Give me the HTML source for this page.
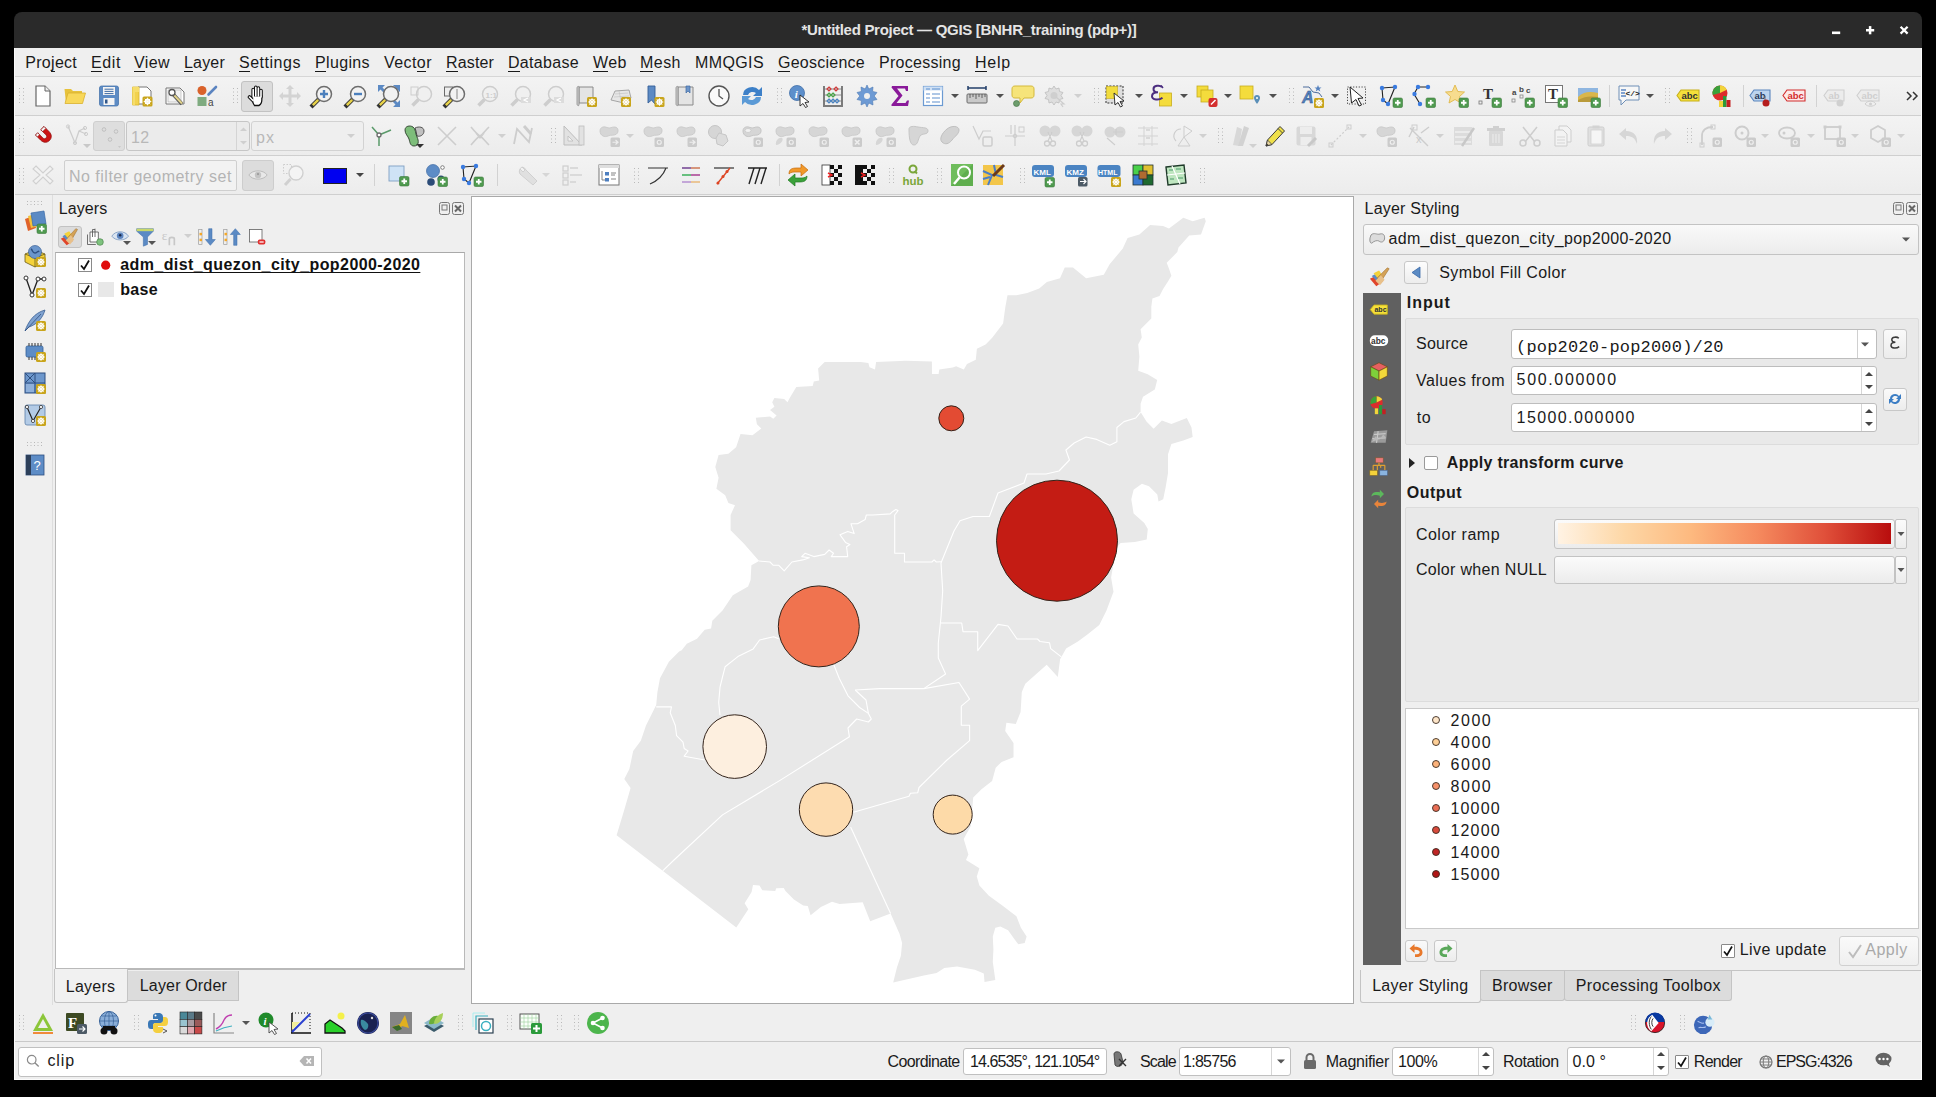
<!DOCTYPE html><html><head><meta charset="utf-8"><style>
*{margin:0;padding:0;box-sizing:border-box}
html,body{width:1936px;height:1097px;background:#000;overflow:hidden;font-family:"Liberation Sans",sans-serif;color:#1a1a1a}
.t{position:absolute;white-space:nowrap;line-height:1;font-size:16px}
svg{overflow:visible;position:absolute}
.u{text-decoration:underline;text-underline-offset:2px}
</style></head><body>
<div style="position:absolute;left:14px;top:40px;width:1908px;height:1040px;background:#efefef"></div>
<div style="position:absolute;left:14px;top:12px;width:1908px;height:36px;background:#2a2a2a;border-radius:8px 8px 0 0"></div>
<div class="t" style="left:801.5px;top:22.10px;font-size:15px;letter-spacing:-0.294px;font-weight:700;color:#e4e4e4;font-family:'Liberation Sans',sans-serif;">*Untitled Project — QGIS [BNHR_training (pdp+)]</div>
<svg style="position:absolute;left:1816px;top:12px" width="106" height="36" viewBox="0 0 106 36"><rect x="16" y="19.5" width="8.2" height="2.6" fill="#fff"/><rect x="50" y="17" width="8.2" height="2.5" fill="#fff"/><rect x="52.85" y="14.1" width="2.5" height="8.2" fill="#fff"/><path d="M84.6 14.8L91.6 21.6M91.6 14.8L84.6 21.6" stroke="#fff" stroke-width="2.3"/></svg>
<div class="t" style="left:25.3px;top:55.06px;font-size:16px;letter-spacing:0.282px;font-weight:400;color:#1a1a1a;font-family:'Liberation Sans',sans-serif;">Project</div>
<div style="position:absolute;left:51px;top:71px;width:4px;height:1px;background:#1a1a1a"></div>
<div class="t" style="left:91.0px;top:55.06px;font-size:16px;letter-spacing:0.602px;font-weight:400;color:#1a1a1a;font-family:'Liberation Sans',sans-serif;">Edit</div>
<div style="position:absolute;left:91px;top:71px;width:11px;height:1px;background:#1a1a1a"></div>
<div class="t" style="left:134.0px;top:55.06px;font-size:16px;letter-spacing:0.395px;font-weight:400;color:#1a1a1a;font-family:'Liberation Sans',sans-serif;">View</div>
<div style="position:absolute;left:134px;top:71px;width:11px;height:1px;background:#1a1a1a"></div>
<div class="t" style="left:184.0px;top:55.06px;font-size:16px;letter-spacing:0.191px;font-weight:400;color:#1a1a1a;font-family:'Liberation Sans',sans-serif;">Layer</div>
<div style="position:absolute;left:184px;top:71px;width:9px;height:1px;background:#1a1a1a"></div>
<div class="t" style="left:239.0px;top:55.06px;font-size:16px;letter-spacing:0.518px;font-weight:400;color:#1a1a1a;font-family:'Liberation Sans',sans-serif;">Settings</div>
<div style="position:absolute;left:239px;top:71px;width:11px;height:1px;background:#1a1a1a"></div>
<div class="t" style="left:315.0px;top:55.06px;font-size:16px;letter-spacing:0.355px;font-weight:400;color:#1a1a1a;font-family:'Liberation Sans',sans-serif;">Plugins</div>
<div style="position:absolute;left:315px;top:71px;width:11px;height:1px;background:#1a1a1a"></div>
<div class="t" style="left:384.0px;top:55.06px;font-size:16px;letter-spacing:0.435px;font-weight:400;color:#1a1a1a;font-family:'Liberation Sans',sans-serif;">Vector</div>
<div style="position:absolute;left:417px;top:71px;width:9px;height:1px;background:#1a1a1a"></div>
<div class="t" style="left:446.0px;top:55.06px;font-size:16px;letter-spacing:0.141px;font-weight:400;color:#1a1a1a;font-family:'Liberation Sans',sans-serif;">Raster</div>
<div style="position:absolute;left:446px;top:71px;width:12px;height:1px;background:#1a1a1a"></div>
<div class="t" style="left:508.0px;top:55.06px;font-size:16px;letter-spacing:0.307px;font-weight:400;color:#1a1a1a;font-family:'Liberation Sans',sans-serif;">Database</div>
<div style="position:absolute;left:508px;top:71px;width:12px;height:1px;background:#1a1a1a"></div>
<div class="t" style="left:593.0px;top:55.06px;font-size:16px;letter-spacing:0.453px;font-weight:400;color:#1a1a1a;font-family:'Liberation Sans',sans-serif;">Web</div>
<div style="position:absolute;left:593px;top:71px;width:15px;height:1px;background:#1a1a1a"></div>
<div class="t" style="left:640.0px;top:55.06px;font-size:16px;letter-spacing:0.465px;font-weight:400;color:#1a1a1a;font-family:'Liberation Sans',sans-serif;">Mesh</div>
<div style="position:absolute;left:640px;top:71px;width:13px;height:1px;background:#1a1a1a"></div>
<div class="t" style="left:695.0px;top:55.06px;font-size:16px;letter-spacing:0.385px;font-weight:400;color:#1a1a1a;font-family:'Liberation Sans',sans-serif;">MMQGIS</div>
<div class="t" style="left:778.0px;top:55.06px;font-size:16px;letter-spacing:0.245px;font-weight:400;color:#1a1a1a;font-family:'Liberation Sans',sans-serif;">Geoscience</div>
<div style="position:absolute;left:778px;top:71px;width:12px;height:1px;background:#1a1a1a"></div>
<div class="t" style="left:879.0px;top:55.06px;font-size:16px;letter-spacing:0.281px;font-weight:400;color:#1a1a1a;font-family:'Liberation Sans',sans-serif;">Processing</div>
<div style="position:absolute;left:905px;top:71px;width:8px;height:1px;background:#1a1a1a"></div>
<div class="t" style="left:975.0px;top:55.06px;font-size:16px;letter-spacing:0.766px;font-weight:400;color:#1a1a1a;font-family:'Liberation Sans',sans-serif;">Help</div>
<div style="position:absolute;left:975px;top:71px;width:12px;height:1px;background:#1a1a1a"></div>
<div style="position:absolute;left:14px;top:76px;width:1908px;height:1px;background:#d6d6d6"></div>
<div style="position:absolute;left:14px;top:77px;width:1908px;height:39px;background:linear-gradient(#f3f3f3,#ececec)"></div>
<div style="position:absolute;left:14px;top:116px;width:1908px;height:39px;background:linear-gradient(#f3f3f3,#ececec)"></div>
<div style="position:absolute;left:14px;top:156px;width:1908px;height:39px;background:linear-gradient(#f3f3f3,#ececec)"></div>
<div style="position:absolute;left:14px;top:115px;width:1908px;height:1px;background:#cfcfcf"></div>
<div style="position:absolute;left:14px;top:155px;width:1908px;height:1px;background:#cfcfcf"></div>
<div style="position:absolute;left:14px;top:194px;width:1908px;height:1px;background:#cfcfcf"></div>
<div style="position:absolute;left:14px;top:195px;width:1908px;height:810px;background:#efefef"></div>
<div style="position:absolute;left:52px;top:195px;width:1px;height:810px;background:#dedede"></div>
<div class="t" style="left:58.7px;top:201.46px;font-size:16px;letter-spacing:0.109px;font-weight:400;color:#1a1a1a;font-family:'Liberation Sans',sans-serif;">Layers</div>
<div style="position:absolute;left:55px;top:252px;width:410px;height:717px;background:#fff;border:1px solid #b9b9b9;border-top-color:#a9a9a9"></div>
<svg style="position:absolute;left:439px;top:202px" width="26" height="14" viewBox="0 0 26 14"><rect x="0.5" y="0.5" width="10" height="12" rx="2" fill="none" stroke="#777"/><rect x="3" y="3" width="5" height="5" fill="none" stroke="#777"/><rect x="13.5" y="0.5" width="11" height="12" rx="2" fill="none" stroke="#777"/><path d="M16 3.5L22 9.5M22 3.5L16 9.5" stroke="#666" stroke-width="2"/></svg>
<div style="position:absolute;left:78px;top:258px;width:14px;height:14px;background:#fff;border:1px solid #8a8a8a"></div>
<svg style="position:absolute;left:78px;top:258px" width="14" height="14" viewBox="0 0 14 14"><path d="M3 7.5L6 11L11 2.5" fill="none" stroke="#111" stroke-width="1.8"/></svg>
<div style="position:absolute;left:78px;top:283px;width:14px;height:14px;background:#fff;border:1px solid #8a8a8a"></div>
<svg style="position:absolute;left:78px;top:283px" width="14" height="14" viewBox="0 0 14 14"><path d="M3 7.5L6 11L11 2.5" fill="none" stroke="#111" stroke-width="1.8"/></svg>
<svg style="position:absolute;left:100px;top:260px" width="12" height="12" viewBox="0 0 12 12"><circle cx="5.7" cy="5.2" r="4.6" fill="#e00d0d"/></svg>
<div style="position:absolute;left:98px;top:282px;width:16px;height:15px;background:#e8e8e8"></div>
<div class="t" style="left:120.2px;top:257.16px;font-size:16px;letter-spacing:0.419px;font-weight:700;color:#111;font-family:'Liberation Sans',sans-serif;text-decoration:underline;text-underline-offset:2px;text-decoration-thickness:1.2px;text-decoration-skip-ink:none">adm_dist_quezon_city_pop2000-2020</div>
<div class="t" style="left:120.2px;top:281.76px;font-size:16px;letter-spacing:0.325px;font-weight:700;color:#111;font-family:'Liberation Sans',sans-serif;">base</div>
<div style="position:absolute;left:55px;top:969px;width:410px;height:1px;background:#b9b9b9"></div>
<div style="position:absolute;left:127px;top:971px;width:112px;height:30px;background:#dcdcdc;border:1px solid #c4c4c4;border-top:none"></div>
<div style="position:absolute;left:54px;top:969px;width:74px;height:34px;background:#f1f1f1;border:1px solid #c4c4c4;border-top:none;border-radius:0 0 3px 3px"></div>
<div class="t" style="left:65.8px;top:978.76px;font-size:16px;letter-spacing:0.226px;font-weight:400;color:#1a1a1a;font-family:'Liberation Sans',sans-serif;">Layers</div>
<div class="t" style="left:139.8px;top:977.66px;font-size:16px;letter-spacing:0.162px;font-weight:400;color:#1a1a1a;font-family:'Liberation Sans',sans-serif;">Layer Order</div>
<div style="position:absolute;left:471px;top:196px;width:883px;height:808px;background:#fff;border:1px solid #a9a9a9"></div>
<svg style="position:absolute;left:472px;top:197px" width="881" height="806" viewBox="0 0 881 806"><polygon points="352.7,164.9 388.8,164.9 396.4,166.0 397.5,170.3 403.0,172.5 404.1,164.9 433.6,163.8 459.9,164.4 460.0,176.9 466.6,176.9 467.3,172.5 480.8,170.4 484.1,169.3 491.8,172.5 495.0,167.1 503.8,162.7 504.9,151.8 513.6,147.4 520.2,140.8 531.1,126.6 533.3,110.2 535.5,98.2 544.3,98.2 555.2,96.0 567.2,91.6 574.9,85.0 588.0,81.2 592.7,70.6 601.0,70.6 614.1,81.2 631.8,77.7 637.8,67.0 650.8,51.6 655.6,40.9 667.4,37.4 678.1,27.9 691.1,29.1 697.0,31.4 711.3,20.8 720.7,24.3 732.6,20.8 733.8,24.3 729.0,37.4 717.2,38.6 706.5,50.4 705.3,55.1 694.7,65.8 697.0,71.7 699.4,78.8 695.8,84.8 691.1,91.9 687.5,99.0 680.4,101.4 679.3,109.7 679.3,121.5 668.6,132.2 669.8,140.5 666.2,147.6 667.4,159.4 666.2,173.7 675.7,177.2 685.2,183.1 682.8,192.6 671.0,199.7 668.6,206.8 668.6,215.1 674.5,224.6 681.6,231.7 689.9,223.4 699.4,227.0 714.8,221.0 719.5,230.5 720.7,240.0 711.3,243.6 699.4,247.1 697.0,254.2 696.0,257.2 696.0,276.2 693.6,290.4 691.2,302.3 686.5,304.6 685.3,297.5 677.0,289.2 669.9,286.8 661.6,292.8 659.3,302.3 661.6,316.5 672.3,326.0 675.8,331.9 674.7,342.5 662.8,344.9 648.6,346.1 644.0,351.0 639.1,380.5 641.5,394.7 634.4,413.7 627.3,427.9 615.4,437.4 605.9,444.5 594.1,451.6 588.1,462.2 585.8,480.0 574.7,467.7 553.3,486.7 549.8,495.0 548.6,515.1 543.8,527.0 534.4,525.8 533.2,534.1 541.5,546.0 541.5,560.2 529.6,564.9 523.7,570.8 520.1,583.9 509.5,592.2 501.2,600.5 500.0,614.7 498.8,628.9 491.7,642.0 496.4,657.4 494.0,663.0 507.4,671.3 504.8,679.6 507.4,688.5 516.9,698.7 531.0,709.0 544.4,719.2 548.9,730.7 554.6,739.6 552.7,746.0 546.3,747.3 542.5,742.2 536.1,733.2 528.4,729.4 523.3,730.7 520.8,739.6 521.4,752.4 520.8,765.1 523.3,783.0 512.5,784.9 511.8,776.6 502.9,772.8 485.0,769.6 472.3,770.9 464.6,776.0 451.8,778.5 421.2,785.6 425.0,770.2 428.9,758.7 430.1,746.0 427.6,737.0 418.6,716.6 398.2,724.3 390.7,705.3 367.5,707.1 360.0,704.8 348.9,709.9 338.6,718.3 335.8,709.0 331.2,708.5 321.9,702.5 313.5,694.1 311.7,690.9 304.2,691.3 303.3,694.1 290.3,693.2 287.5,688.6 281.0,688.1 279.6,695.1 272.6,706.2 276.3,712.3 264.3,730.4 144.6,638.3 152.3,612.8 158.6,591.1 152.3,582.1 157.4,571.9 161.2,554.0 168.8,543.8 174.0,528.5 184.2,508.1 185.4,495.3 188.0,481.3 196.9,464.7 207.1,454.5 209.7,453.2 214.8,446.8 225.0,441.7 232.7,432.8 239.1,431.5 240.3,423.8 250.5,413.6 260.8,398.3 276.1,389.4 278.6,383.0 279.4,368.3 287.1,364.0 271.8,346.5 258.6,333.3 258.6,318.0 263.0,308.2 256.4,306.0 253.2,298.3 244.4,291.8 246.6,280.8 243.3,269.9 246.6,257.9 256.4,256.8 264.1,250.2 268.5,237.0 280.5,238.2 289.3,231.6 284.9,227.2 283.8,220.7 298.0,219.6 301.3,221.8 304.6,218.5 298.0,213.0 302.4,209.7 300.2,205.3 302.4,201.0 312.2,202.1 315.5,205.3 317.7,201.0 321.0,195.5 324.3,190.0 340.7,188.9 341.8,184.6 347.2,183.5 346.1,171.4" fill="#e8e8e8"/><polyline points="668.6,215.1 663.8,221.0 652.0,224.6 644.9,230.5 644.9,244.8 637.8,248.3 624.7,242.4 614.1,240.0 602.2,246.0 593.9,253.0 597.5,263.0 587.0,274.0 574.0,277.0 555.0,277.0 552.0,286.0 526.0,296.0 517.4,319.5 501.0,319.5 488.0,323.8 482.0,334.0 470.7,361.8 469.0,366.0 470.7,393.8 469.0,420.0 466.3,446.0 466.3,461.0 473.6,477.0 451.8,491.6 408.0,491.6 383.2,493.0" fill="none" stroke="#fff" stroke-width="1.1" stroke-linejoin="round"/><polyline points="287.1,364.0 298.0,365.0 301.3,368.3 306.8,368.3 312.2,373.8 319.9,365.0 330.8,362.9 337.4,360.7 329.7,359.6 333.0,356.3 341.8,359.6 352.7,357.4 357.1,353.0 361.5,356.3 359.3,359.6 375.7,359.6 374.6,349.7 377.9,347.5 373.5,345.4 368.0,337.7 375.7,334.4 382.2,336.6 379.0,326.8 385.5,326.8 393.2,322.4 394.3,318.0 400.8,318.0 418.3,316.9 420.5,314.7 423.8,312.5 426.0,313.6 422.7,318.0 422.7,356.3 432.5,356.3 432.5,365.0 459.9,365.0 462.1,362.9 464.3,365.0 469.0,364.7" fill="none" stroke="#fff" stroke-width="1.1" stroke-linejoin="round"/><polyline points="469.0,426.0 489.7,426.0 491.0,434.7 505.7,434.7 505.7,453.6 526.0,427.4 536.0,429.0 545.0,442.0 565.5,442.0 568.0,444.5 577.5,445.7 578.7,451.6 589.3,459.9" fill="none" stroke="#fff" stroke-width="1.1" stroke-linejoin="round"/><polyline points="451.8,491.6 487.0,485.5 497.6,502.1 489.3,509.2 489.3,528.2 497.6,528.2 497.6,543.6 475.0,563.0 447.0,590.5 445.7,595.8 438.4,596.3 437.0,599.3 381.5,615.3" fill="none" stroke="#fff" stroke-width="1.1" stroke-linejoin="round"/><polyline points="378.6,629.9 418.6,716.6" fill="none" stroke="#fff" stroke-width="1.1" stroke-linejoin="round"/><polyline points="190.7,673.9 202.0,663.0 250.5,617.9 308.0,583.4 377.4,539.7 376.0,531.0 384.7,522.0 396.4,525.0 399.3,522.0 396.4,516.4 387.6,510.5 376.0,498.8 367.2,481.3 361.4,466.8" fill="none" stroke="#fff" stroke-width="1.1" stroke-linejoin="round"/><polyline points="383.2,493.0 394.0,503.0 396.4,516.4" fill="none" stroke="#fff" stroke-width="1.1" stroke-linejoin="round"/><polyline points="184.2,509.9 199.5,509.9 198.2,515.8 203.3,528.5 204.6,538.7 211.0,545.1 212.2,551.5 216.1,554.0 212.2,559.2 232.7,563.0" fill="none" stroke="#fff" stroke-width="1.1" stroke-linejoin="round"/><polyline points="248.0,518.3 246.7,505.5 248.0,490.2 250.5,480.0 253.1,469.8 265.9,459.6 281.2,451.9 287.6,443.0 301.6,439.7 306.7,441.7" fill="none" stroke="#fff" stroke-width="1.1" stroke-linejoin="round"/><circle cx="479.3" cy="221.3" r="12.5" fill="#e34b33" stroke="#33231a" stroke-width="1"/><circle cx="585.0" cy="343.7" r="60.5" fill="#c41c14" stroke="#33231a" stroke-width="1"/><circle cx="346.8" cy="429.4" r="40.5" fill="#f0734f" stroke="#33231a" stroke-width="1"/><circle cx="262.7" cy="549.6" r="31.8" fill="#fdefdf" stroke="#33231a" stroke-width="1"/><circle cx="354.0" cy="612.6" r="26.7" fill="#fddcb0" stroke="#33231a" stroke-width="1"/><circle cx="480.7" cy="617.6" r="19.5" fill="#fddaa8" stroke="#33231a" stroke-width="1"/></svg>
<div class="t" style="left:1364.6px;top:201.36px;font-size:16px;letter-spacing:0.203px;font-weight:400;color:#1a1a1a;font-family:'Liberation Sans',sans-serif;">Layer Styling</div>
<svg style="position:absolute;left:1893px;top:202px" width="26" height="14" viewBox="0 0 26 14"><rect x="0.5" y="0.5" width="10" height="12" rx="2" fill="none" stroke="#777"/><rect x="3" y="3" width="5" height="5" fill="none" stroke="#777"/><rect x="13.5" y="0.5" width="11" height="12" rx="2" fill="none" stroke="#777"/><path d="M16 3.5L22 9.5M22 3.5L16 9.5" stroke="#666" stroke-width="2"/></svg>
<div style="position:absolute;left:1363px;top:224px;width:556px;height:31px;background:linear-gradient(#f9f9f9,#ececec);border:1px solid #c3c3c3;border-radius:3px"></div>
<svg style="position:absolute;left:1369px;top:232px" width="17" height="13" viewBox="0 0 17 13"><path d="M2 3C5 0 8 3 11 2C15 1 16 4 15.5 7C15 10 12 11 10 9C8 8 5 9 3 11C1 12 0.5 8 1 6Z" fill="#dcdcdc" stroke="#8c8c8c" stroke-width="0.9"/></svg>
<div class="t" style="left:1388.4px;top:231.26px;font-size:16px;letter-spacing:0.357px;font-weight:400;color:#1a1a1a;font-family:'Liberation Sans',sans-serif;">adm_dist_quezon_city_pop2000-2020</div>
<svg style="position:absolute;left:1901px;top:235px" width="10" height="8" viewBox="0 0 10 8"><path d="M1 2.5L9 2.5L5 6.5Z" fill="#555"/></svg>
<div style="position:absolute;left:1404px;top:261px;width:24px;height:23px;background:linear-gradient(#fdfdfd,#ededed);border:1px solid #c8c8c8;border-radius:3px"></div>
<svg style="position:absolute;left:1409px;top:265px" width="14" height="15" viewBox="0 0 14 15"><path d="M3 7.5L11 2V13Z" fill="#5b8bc4" stroke="#3a6aa8" stroke-width="0.8"/></svg>
<div class="t" style="left:1439.3px;top:265.06px;font-size:16px;letter-spacing:0.364px;font-weight:400;color:#1a1a1a;font-family:'Liberation Sans',sans-serif;">Symbol Fill Color</div>
<div style="position:absolute;left:1363px;top:293px;width:38px;height:672px;background:#606060"></div>
<div class="t" style="left:1406.8px;top:295.36px;font-size:16px;letter-spacing:0.975px;font-weight:700;color:#1a1a1a;font-family:'Liberation Sans',sans-serif;">Input</div>
<div style="position:absolute;left:1405px;top:318px;width:514px;height:127px;background:#e9e9e9;border:1px solid #dcdcdc;border-radius:2px"></div>
<div class="t" style="left:1416.0px;top:335.96px;font-size:16px;letter-spacing:0.247px;font-weight:400;color:#1a1a1a;font-family:'Liberation Sans',sans-serif;">Source</div>
<div style="position:absolute;left:1511px;top:329px;width:366px;height:30px;background:#fff;border:1px solid #bdbdbd;border-radius:3px"></div>
<div style="position:absolute;left:1857px;top:330px;width:1px;height:28px;background:#d0d0d0"></div>
<svg style="position:absolute;left:1860px;top:340px" width="10" height="8" viewBox="0 0 10 8"><path d="M1 2.5L9 2.5L5 6.5Z" fill="#555"/></svg>
<div class="t" style="left:1516.0px;top:338.58px;font-size:17px;letter-spacing:0.182px;font-weight:400;color:#1a1a1a;font-family:'Liberation Mono',monospace;">(pop2020-pop2000)/20</div>
<div style="position:absolute;left:1883px;top:329px;width:24px;height:30px;background:linear-gradient(#fafafa,#ececec);border:1px solid #c8c8c8;border-radius:3px"></div>
<svg style="position:absolute;left:1890px;top:336px" width="10" height="13" viewBox="0 0 10 13"><path d="M8.8 2.2C7 0.5 1.8 0.8 1.8 3.5C1.8 5.5 3.6 6.2 5.4 6.2C3.2 6.2 1 7.2 1 9.4C1 12.4 6.5 12.8 9.2 10.6" fill="none" stroke="#3a3a3a" stroke-width="1.5"/></svg>
<div class="t" style="left:1416.0px;top:372.66px;font-size:16px;letter-spacing:0.433px;font-weight:400;color:#1a1a1a;font-family:'Liberation Sans',sans-serif;">Values from</div>
<div style="position:absolute;left:1511px;top:366px;width:366px;height:29px;background:#fff;border:1px solid #bdbdbd;border-radius:3px"></div>
<div style="position:absolute;left:1861px;top:367px;width:1px;height:27px;background:#d6d6d6"></div>
<svg style="position:absolute;left:1863px;top:369px" width="12" height="24" viewBox="0 0 12 24"><path d="M2 7L6 3L10 7Z" fill="#444"/><path d="M2 16L6 20L10 16Z" fill="#444"/></svg>
<div class="t" style="left:1516.6px;top:372.26px;font-size:16px;letter-spacing:1.659px;font-weight:400;color:#1a1a1a;font-family:'Liberation Sans',sans-serif;">500.000000</div>
<div class="t" style="left:1416.7px;top:409.66px;font-size:16px;letter-spacing:0.570px;font-weight:400;color:#1a1a1a;font-family:'Liberation Sans',sans-serif;">to</div>
<div style="position:absolute;left:1511px;top:403px;width:366px;height:29px;background:#fff;border:1px solid #bdbdbd;border-radius:3px"></div>
<div style="position:absolute;left:1861px;top:404px;width:1px;height:27px;background:#d6d6d6"></div>
<svg style="position:absolute;left:1863px;top:406px" width="12" height="24" viewBox="0 0 12 24"><path d="M2 7L6 3L10 7Z" fill="#444"/><path d="M2 16L6 20L10 16Z" fill="#444"/></svg>
<div class="t" style="left:1516.6px;top:409.66px;font-size:16px;letter-spacing:1.407px;font-weight:400;color:#1a1a1a;font-family:'Liberation Sans',sans-serif;">15000.000000</div>
<div style="position:absolute;left:1883px;top:388px;width:24px;height:23px;background:linear-gradient(#fafafa,#ececec);border:1px solid #c8c8c8;border-radius:3px"></div>
<svg style="position:absolute;left:1886px;top:390px" width="18" height="18" viewBox="0 0 18 18"><path d="M4 9A5 5 0 0 1 13 6L15 4V9H10L12 7A3.5 3.5 0 0 0 6 9Z" fill="#3b7dc4"/><path d="M14 9A5 5 0 0 1 5 12L3 14V9H8L6 11A3.5 3.5 0 0 0 12 9Z" fill="#3b7dc4"/></svg>
<svg style="position:absolute;left:1408px;top:457px" width="8" height="12" viewBox="0 0 8 12"><path d="M1 1L7 6L1 11Z" fill="#222"/></svg>
<div style="position:absolute;left:1424px;top:456px;width:14px;height:14px;background:#fff;border:1px solid #9a9a9a;border-radius:2px"></div>
<div class="t" style="left:1446.8px;top:454.86px;font-size:16px;letter-spacing:0.292px;font-weight:700;color:#1a1a1a;font-family:'Liberation Sans',sans-serif;">Apply transform curve</div>
<div class="t" style="left:1406.8px;top:484.96px;font-size:16px;letter-spacing:0.491px;font-weight:700;color:#1a1a1a;font-family:'Liberation Sans',sans-serif;">Output</div>
<div style="position:absolute;left:1405px;top:507px;width:514px;height:195px;background:#e9e9e9;border:1px solid #dcdcdc;border-radius:2px"></div>
<div class="t" style="left:1415.9px;top:526.86px;font-size:16px;letter-spacing:0.501px;font-weight:400;color:#1a1a1a;font-family:'Liberation Sans',sans-serif;">Color ramp</div>
<div style="position:absolute;left:1554px;top:519px;width:341px;height:30px;background:linear-gradient(#fbfbfb,#ececec);border:1px solid #c3c3c3;border-radius:3px"></div>
<div style="position:absolute;left:1558px;top:523px;width:333px;height:21px;background:linear-gradient(90deg,#fff3e4,#fdd7a6 20%,#fdb97f 40%,#f58a5e 60%,#e0503a 80%,#b80d0d)"></div>
<div style="position:absolute;left:1895px;top:519px;width:12px;height:30px;background:linear-gradient(#fbfbfb,#ececec);border:1px solid #c3c3c3;border-radius:2px"></div>
<svg style="position:absolute;left:1897px;top:531px" width="8" height="6" viewBox="0 0 8 6"><path d="M0.5 1L7.5 1L4 5Z" fill="#555"/></svg>
<div class="t" style="left:1415.9px;top:562.26px;font-size:16px;letter-spacing:0.321px;font-weight:400;color:#1a1a1a;font-family:'Liberation Sans',sans-serif;">Color when NULL</div>
<div style="position:absolute;left:1554px;top:556px;width:341px;height:28px;background:linear-gradient(#fbfbfb,#ececec);border:1px solid #c3c3c3;border-radius:3px"></div>
<div style="position:absolute;left:1895px;top:556px;width:12px;height:28px;background:linear-gradient(#fbfbfb,#ececec);border:1px solid #c3c3c3;border-radius:2px"></div>
<svg style="position:absolute;left:1897px;top:567px" width="8" height="6" viewBox="0 0 8 6"><path d="M0.5 1L7.5 1L4 5Z" fill="#555"/></svg>
<div style="position:absolute;left:1405px;top:708px;width:514px;height:221px;background:#fff;border:1px solid #c9c9c9"></div>
<svg style="position:absolute;left:1430px;top:714.0px" width="12" height="12" viewBox="0 0 12 12"><circle cx="6" cy="6" r="3.5" fill="#fde5c8" stroke="#3a2a20" stroke-width="0.9"/></svg>
<div class="t" style="left:1450.4px;top:713.06px;font-size:16px;letter-spacing:1.594px;font-weight:400;color:#1a1a1a;font-family:'Liberation Sans',sans-serif;">2000</div>
<svg style="position:absolute;left:1430px;top:736.0px" width="12" height="12" viewBox="0 0 12 12"><circle cx="6" cy="6" r="3.5" fill="#fdcf97" stroke="#3a2a20" stroke-width="0.9"/></svg>
<div class="t" style="left:1450.4px;top:735.06px;font-size:16px;letter-spacing:1.594px;font-weight:400;color:#1a1a1a;font-family:'Liberation Sans',sans-serif;">4000</div>
<svg style="position:absolute;left:1430px;top:758.0px" width="12" height="12" viewBox="0 0 12 12"><circle cx="6" cy="6" r="3.5" fill="#fbb27a" stroke="#3a2a20" stroke-width="0.9"/></svg>
<div class="t" style="left:1450.4px;top:757.06px;font-size:16px;letter-spacing:1.594px;font-weight:400;color:#1a1a1a;font-family:'Liberation Sans',sans-serif;">6000</div>
<svg style="position:absolute;left:1430px;top:780.0px" width="12" height="12" viewBox="0 0 12 12"><circle cx="6" cy="6" r="3.5" fill="#f6916a" stroke="#3a2a20" stroke-width="0.9"/></svg>
<div class="t" style="left:1450.4px;top:779.06px;font-size:16px;letter-spacing:1.594px;font-weight:400;color:#1a1a1a;font-family:'Liberation Sans',sans-serif;">8000</div>
<svg style="position:absolute;left:1430px;top:802.0px" width="12" height="12" viewBox="0 0 12 12"><circle cx="6" cy="6" r="3.5" fill="#ea6e55" stroke="#3a2a20" stroke-width="0.9"/></svg>
<div class="t" style="left:1450.4px;top:801.06px;font-size:16px;letter-spacing:1.214px;font-weight:400;color:#1a1a1a;font-family:'Liberation Sans',sans-serif;">10000</div>
<svg style="position:absolute;left:1430px;top:824.0px" width="12" height="12" viewBox="0 0 12 12"><circle cx="6" cy="6" r="3.5" fill="#d84a3c" stroke="#3a2a20" stroke-width="0.9"/></svg>
<div class="t" style="left:1450.4px;top:823.06px;font-size:16px;letter-spacing:1.214px;font-weight:400;color:#1a1a1a;font-family:'Liberation Sans',sans-serif;">12000</div>
<svg style="position:absolute;left:1430px;top:846.0px" width="12" height="12" viewBox="0 0 12 12"><circle cx="6" cy="6" r="3.5" fill="#bf2525" stroke="#3a2a20" stroke-width="0.9"/></svg>
<div class="t" style="left:1450.4px;top:845.06px;font-size:16px;letter-spacing:1.214px;font-weight:400;color:#1a1a1a;font-family:'Liberation Sans',sans-serif;">14000</div>
<svg style="position:absolute;left:1430px;top:868.0px" width="12" height="12" viewBox="0 0 12 12"><circle cx="6" cy="6" r="3.5" fill="#b01515" stroke="#3a2a20" stroke-width="0.9"/></svg>
<div class="t" style="left:1450.4px;top:867.06px;font-size:16px;letter-spacing:1.214px;font-weight:400;color:#1a1a1a;font-family:'Liberation Sans',sans-serif;">15000</div>
<div style="position:absolute;left:1405px;top:940px;width:23px;height:22px;background:linear-gradient(#fafafa,#ececec);border:1px solid #c8c8c8;border-radius:3px"></div>
<svg style="position:absolute;left:1408px;top:942px" width="17" height="17" viewBox="0 0 17 17"><path d="M1.5 6.5L6.5 2V4.8C11.5 4.5 14.5 7 14.5 10.5C14.5 13.5 12 15 9 15H7V12.3H9C10.5 12.3 11.7 11.6 11.7 10.3C11.7 8.6 9.8 7.6 6.5 7.8V11Z" fill="#e8782a"/></svg>
<div style="position:absolute;left:1434px;top:940px;width:23px;height:22px;background:linear-gradient(#fafafa,#ececec);border:1px solid #c8c8c8;border-radius:3px"></div>
<svg style="position:absolute;left:1437px;top:942px" width="17" height="17" viewBox="0 0 17 17"><path d="M15.5 6.5L10.5 2V4.8C5.5 4.5 2.5 7 2.5 10.5C2.5 13.5 5 15 8 15H10V12.3H8C6.5 12.3 5.3 11.6 5.3 10.3C5.3 8.6 7.2 7.6 10.5 7.8V11Z" fill="#5aa85a"/></svg>
<div style="position:absolute;left:1721px;top:944px;width:14px;height:14px;background:#fff;border:1px solid #8a8a8a;border-radius:1px"></div>
<svg style="position:absolute;left:1721px;top:944px" width="14" height="14" viewBox="0 0 14 14"><path d="M3 7.5L6 11L11 2.5" fill="none" stroke="#111" stroke-width="1.7"/></svg>
<div class="t" style="left:1739.8px;top:941.96px;font-size:16px;letter-spacing:0.381px;font-weight:400;color:#1a1a1a;font-family:'Liberation Sans',sans-serif;">Live update</div>
<div style="position:absolute;left:1839px;top:936px;width:80px;height:30px;background:linear-gradient(#fafafa,#efefef);border:1px solid #d0d0d0;border-radius:3px"></div>
<svg style="position:absolute;left:1847px;top:943px" width="16" height="16" viewBox="0 0 16 16"><path d="M2 9L6 14L14 2" fill="none" stroke="#bdbdbd" stroke-width="2"/></svg>
<div class="t" style="left:1865.3px;top:942.46px;font-size:16px;letter-spacing:0.471px;font-weight:400;color:#a9a9a9;font-family:'Liberation Sans',sans-serif;">Apply</div>
<div style="position:absolute;left:1360px;top:970px;width:562px;height:1px;background:#c4c4c4"></div>
<div style="position:absolute;left:1480px;top:971px;width:85px;height:30px;background:#dcdcdc;border:1px solid #c4c4c4;border-top:none;border-radius:0 0 3px 3px"></div>
<div style="position:absolute;left:1564px;top:971px;width:168px;height:30px;background:#dcdcdc;border:1px solid #c4c4c4;border-top:none;border-radius:0 0 3px 3px"></div>
<div style="position:absolute;left:1360px;top:970px;width:121px;height:33px;background:#f1f1f1;border:1px solid #c4c4c4;border-top:none;border-radius:0 0 3px 3px"></div>
<div class="t" style="left:1372.2px;top:978.26px;font-size:16px;letter-spacing:0.287px;font-weight:400;color:#1a1a1a;font-family:'Liberation Sans',sans-serif;">Layer Styling</div>
<div class="t" style="left:1492.0px;top:977.96px;font-size:16px;letter-spacing:0.271px;font-weight:400;color:#1a1a1a;font-family:'Liberation Sans',sans-serif;">Browser</div>
<div class="t" style="left:1575.8px;top:977.96px;font-size:16px;letter-spacing:0.363px;font-weight:400;color:#1a1a1a;font-family:'Liberation Sans',sans-serif;">Processing Toolbox</div>
<div style="position:absolute;left:14px;top:1041px;width:1908px;height:1px;background:#c9c9c9"></div>
<div style="position:absolute;left:18px;top:1047px;width:304px;height:30px;background:#fff;border:1px solid #c0c0c0;border-radius:3px"></div>
<svg style="position:absolute;left:24px;top:1052px" width="16" height="16" viewBox="0 0 16 16"><circle cx="7.7" cy="7.7" r="4.3" fill="none" stroke="#8a8a8a" stroke-width="1.2"/><path d="M10.8 10.8L14.7 14.5" stroke="#8a8a8a" stroke-width="1.4"/></svg>
<div class="t" style="left:47.5px;top:1053.46px;font-size:16px;letter-spacing:0.867px;font-weight:400;color:#1a1a1a;font-family:'Liberation Sans',sans-serif;">clip</div>
<svg style="position:absolute;left:299px;top:1055px" width="16" height="12" viewBox="0 0 16 12"><path d="M5 1H15V11H5L0.5 6Z" fill="#b5b5b5"/><path d="M7.5 3.5L12 8.5M12 3.5L7.5 8.5" stroke="#fff" stroke-width="1.5"/></svg>
<div class="t" style="left:887.5px;top:1053.86px;font-size:16px;letter-spacing:-0.624px;font-weight:400;color:#1a1a1a;font-family:'Liberation Sans',sans-serif;">Coordinate</div>
<div style="position:absolute;left:963px;top:1048px;width:144px;height:27px;background:#fff;border:1px solid #c0c0c0;border-radius:3px"></div>
<div class="t" style="left:970.0px;top:1053.86px;font-size:16px;letter-spacing:-0.900px;font-weight:400;color:#1a1a1a;font-family:'Liberation Sans',sans-serif;">14.6535°, 121.1054°</div>
<div class="t" style="left:1140.0px;top:1053.86px;font-size:16px;letter-spacing:-0.829px;font-weight:400;color:#1a1a1a;font-family:'Liberation Sans',sans-serif;">Scale</div>
<div style="position:absolute;left:1179px;top:1047px;width:112px;height:29px;background:#fff;border:1px solid #c0c0c0;border-radius:3px"></div>
<div style="position:absolute;left:1271px;top:1048px;width:1px;height:27px;background:#d6d6d6"></div>
<svg style="position:absolute;left:1276px;top:1058px" width="10" height="7" viewBox="0 0 10 7"><path d="M1 1.5L9 1.5L5 5.5Z" fill="#555"/></svg>
<div class="t" style="left:1183.0px;top:1053.86px;font-size:16px;letter-spacing:-0.727px;font-weight:400;color:#1a1a1a;font-family:'Liberation Sans',sans-serif;">1:85756</div>
<svg style="position:absolute;left:1302px;top:1052px" width="16" height="18" viewBox="0 0 16 18"><rect x="2" y="8" width="12" height="9" rx="1.5" fill="#6a6a6a"/><path d="M4.5 8V5.5A3.5 3.5 0 0 1 11.5 5.5V8" fill="none" stroke="#6a6a6a" stroke-width="2"/></svg>
<div class="t" style="left:1325.8px;top:1053.86px;font-size:16px;letter-spacing:-0.295px;font-weight:400;color:#1a1a1a;font-family:'Liberation Sans',sans-serif;">Magnifier</div>
<div style="position:absolute;left:1392px;top:1047px;width:102px;height:29px;background:#fff;border:1px solid #c0c0c0;border-radius:3px"></div>
<div style="position:absolute;left:1478px;top:1048px;width:1px;height:27px;background:#d6d6d6"></div>
<svg style="position:absolute;left:1480px;top:1049px" width="12" height="24" viewBox="0 0 12 24"><path d="M2 7L6 3L10 7Z" fill="#444"/><path d="M2 17L6 21L10 17Z" fill="#444"/></svg>
<div class="t" style="left:1398.0px;top:1053.86px;font-size:16px;letter-spacing:-0.388px;font-weight:400;color:#1a1a1a;font-family:'Liberation Sans',sans-serif;">100%</div>
<div class="t" style="left:1503.0px;top:1053.86px;font-size:16px;letter-spacing:-0.507px;font-weight:400;color:#1a1a1a;font-family:'Liberation Sans',sans-serif;">Rotation</div>
<div style="position:absolute;left:1567px;top:1047px;width:102px;height:29px;background:#fff;border:1px solid #c0c0c0;border-radius:3px"></div>
<div style="position:absolute;left:1653px;top:1048px;width:1px;height:27px;background:#d6d6d6"></div>
<svg style="position:absolute;left:1655px;top:1049px" width="12" height="24" viewBox="0 0 12 24"><path d="M2 7L6 3L10 7Z" fill="#444"/><path d="M2 17L6 21L10 17Z" fill="#444"/></svg>
<div class="t" style="left:1572.6px;top:1053.86px;font-size:16px;letter-spacing:0.055px;font-weight:400;color:#1a1a1a;font-family:'Liberation Sans',sans-serif;">0.0 °</div>
<div style="position:absolute;left:1675px;top:1055px;width:14px;height:14px;background:#fff;border:1px solid #8a8a8a;border-radius:1px"></div>
<svg style="position:absolute;left:1675px;top:1055px" width="14" height="14" viewBox="0 0 14 14"><path d="M3 7.5L6 11L11 2.5" fill="none" stroke="#111" stroke-width="1.7"/></svg>
<div class="t" style="left:1693.8px;top:1053.86px;font-size:16px;letter-spacing:-0.719px;font-weight:400;color:#1a1a1a;font-family:'Liberation Sans',sans-serif;">Render</div>
<svg style="position:absolute;left:1758px;top:1054px" width="16" height="16" viewBox="0 0 16 16"><circle cx="8" cy="8" r="6" fill="none" stroke="#777" stroke-width="1.2"/><ellipse cx="8" cy="8" rx="2.8" ry="6" fill="none" stroke="#777" stroke-width="1"/><path d="M2 8H14M3 5H13M3 11H13" stroke="#777" stroke-width="0.9"/></svg>
<div class="t" style="left:1776.0px;top:1053.86px;font-size:16px;letter-spacing:-0.994px;font-weight:400;color:#1a1a1a;font-family:'Liberation Sans',sans-serif;">EPSG:4326</div>
<svg style="position:absolute;left:1875px;top:1052px" width="18" height="18" viewBox="0 0 18 18"><ellipse cx="8.5" cy="7" rx="8" ry="6.3" fill="#636363"/><path d="M10 12L15 15L13 10Z" fill="#636363"/><circle cx="4.6" cy="7" r="1.2" fill="#fff"/><circle cx="8.5" cy="7" r="1.2" fill="#fff"/><circle cx="12.4" cy="7" r="1.2" fill="#fff"/></svg>
<div style="position:absolute;left:14px;top:48px;width:1px;height:1032px;background:#fbfbfb"></div>
<div style="position:absolute;left:1921px;top:48px;width:1px;height:1032px;background:#fbfbfb"></div>
<div style="position:absolute;left:14px;top:1079px;width:1908px;height:1px;background:#fbfbfb"></div>
<svg style="left:19px;top:88px" width="6" height="16" viewBox="0 0 6 16"><rect x="0" y="0" width="1" height="1" fill="#b9b9b9"/><rect x="0" y="3.5" width="1" height="1" fill="#b9b9b9"/><rect x="0" y="7" width="1" height="1" fill="#b9b9b9"/><rect x="0" y="10.5" width="1" height="1" fill="#b9b9b9"/><rect x="0" y="14" width="1" height="1" fill="#b9b9b9"/><rect x="4" y="0" width="1" height="1" fill="#b9b9b9"/><rect x="4" y="3.5" width="1" height="1" fill="#b9b9b9"/><rect x="4" y="7" width="1" height="1" fill="#b9b9b9"/><rect x="4" y="10.5" width="1" height="1" fill="#b9b9b9"/><rect x="4" y="14" width="1" height="1" fill="#b9b9b9"/></svg>
<svg style="left:233px;top:88px" width="6" height="16" viewBox="0 0 6 16"><rect x="0" y="0" width="1" height="1" fill="#b9b9b9"/><rect x="0" y="3.5" width="1" height="1" fill="#b9b9b9"/><rect x="0" y="7" width="1" height="1" fill="#b9b9b9"/><rect x="0" y="10.5" width="1" height="1" fill="#b9b9b9"/><rect x="0" y="14" width="1" height="1" fill="#b9b9b9"/><rect x="4" y="0" width="1" height="1" fill="#b9b9b9"/><rect x="4" y="3.5" width="1" height="1" fill="#b9b9b9"/><rect x="4" y="7" width="1" height="1" fill="#b9b9b9"/><rect x="4" y="10.5" width="1" height="1" fill="#b9b9b9"/><rect x="4" y="14" width="1" height="1" fill="#b9b9b9"/></svg>
<svg style="left:777px;top:88px" width="6" height="16" viewBox="0 0 6 16"><rect x="0" y="0" width="1" height="1" fill="#b9b9b9"/><rect x="0" y="3.5" width="1" height="1" fill="#b9b9b9"/><rect x="0" y="7" width="1" height="1" fill="#b9b9b9"/><rect x="0" y="10.5" width="1" height="1" fill="#b9b9b9"/><rect x="0" y="14" width="1" height="1" fill="#b9b9b9"/><rect x="4" y="0" width="1" height="1" fill="#b9b9b9"/><rect x="4" y="3.5" width="1" height="1" fill="#b9b9b9"/><rect x="4" y="7" width="1" height="1" fill="#b9b9b9"/><rect x="4" y="10.5" width="1" height="1" fill="#b9b9b9"/><rect x="4" y="14" width="1" height="1" fill="#b9b9b9"/></svg>
<svg style="left:1094px;top:88px" width="6" height="16" viewBox="0 0 6 16"><rect x="0" y="0" width="1" height="1" fill="#b9b9b9"/><rect x="0" y="3.5" width="1" height="1" fill="#b9b9b9"/><rect x="0" y="7" width="1" height="1" fill="#b9b9b9"/><rect x="0" y="10.5" width="1" height="1" fill="#b9b9b9"/><rect x="0" y="14" width="1" height="1" fill="#b9b9b9"/><rect x="4" y="0" width="1" height="1" fill="#b9b9b9"/><rect x="4" y="3.5" width="1" height="1" fill="#b9b9b9"/><rect x="4" y="7" width="1" height="1" fill="#b9b9b9"/><rect x="4" y="10.5" width="1" height="1" fill="#b9b9b9"/><rect x="4" y="14" width="1" height="1" fill="#b9b9b9"/></svg>
<svg style="left:1289px;top:88px" width="6" height="16" viewBox="0 0 6 16"><rect x="0" y="0" width="1" height="1" fill="#b9b9b9"/><rect x="0" y="3.5" width="1" height="1" fill="#b9b9b9"/><rect x="0" y="7" width="1" height="1" fill="#b9b9b9"/><rect x="0" y="10.5" width="1" height="1" fill="#b9b9b9"/><rect x="0" y="14" width="1" height="1" fill="#b9b9b9"/><rect x="4" y="0" width="1" height="1" fill="#b9b9b9"/><rect x="4" y="3.5" width="1" height="1" fill="#b9b9b9"/><rect x="4" y="7" width="1" height="1" fill="#b9b9b9"/><rect x="4" y="10.5" width="1" height="1" fill="#b9b9b9"/><rect x="4" y="14" width="1" height="1" fill="#b9b9b9"/></svg>
<svg style="left:1665px;top:88px" width="6" height="16" viewBox="0 0 6 16"><rect x="0" y="0" width="1" height="1" fill="#b9b9b9"/><rect x="0" y="3.5" width="1" height="1" fill="#b9b9b9"/><rect x="0" y="7" width="1" height="1" fill="#b9b9b9"/><rect x="0" y="10.5" width="1" height="1" fill="#b9b9b9"/><rect x="0" y="14" width="1" height="1" fill="#b9b9b9"/><rect x="4" y="0" width="1" height="1" fill="#b9b9b9"/><rect x="4" y="3.5" width="1" height="1" fill="#b9b9b9"/><rect x="4" y="7" width="1" height="1" fill="#b9b9b9"/><rect x="4" y="10.5" width="1" height="1" fill="#b9b9b9"/><rect x="4" y="14" width="1" height="1" fill="#b9b9b9"/></svg>
<svg style="left:31.0px;top:84.0px" width="24" height="24" viewBox="0 0 24 24"><path d="M5 2H14L19 7V22H5Z" fill="#fff" stroke="#666" stroke-width="1.2"/><path d="M14 2V7H19" fill="#eee" stroke="#666" stroke-width="1"/></svg>
<svg style="left:63.0px;top:84.0px" width="24" height="24" viewBox="0 0 24 24"><path d="M1.5 5H8L10 7H19V19H3Z" fill="#e7c23c"/><path d="M5 9H22.5L19.5 19.5H2Z" fill="#f8d85a" stroke="#d9b12d" stroke-width="0.8"/></svg>
<svg style="left:97.0px;top:84.0px" width="24" height="24" viewBox="0 0 24 24"><rect x="2.5" y="2" width="19" height="20" rx="2" fill="#5d8bc4" stroke="#4a76ad" stroke-width="0.8"/><rect x="6" y="3" width="12" height="8" fill="#f4f4f4"/><path d="M7.5 5.2H16.5M7.5 7.4H16.5M7.5 9.6H16.5" stroke="#3f6ca5" stroke-width="1"/><rect x="6.5" y="14" width="11" height="7" fill="#f4f4f4"/><rect x="8" y="15.5" width="2.5" height="4" fill="#30568a"/></svg>
<svg style="left:130.0px;top:84.0px" width="24" height="24" viewBox="0 0 24 24"><path d="M8 3H17L21 7V20H8Z" fill="#fff" stroke="#777"/><path d="M2.5 3H9V21H2.5Z" fill="#f2d24e" stroke="#d8b32a" stroke-width="0.8"/><path d="M2.5 3L9 3 9 8 5 8 5 21 2.5 21Z" fill="#f6dd6a"/><rect x="12.5" y="12.5" width="10" height="10" rx="1.5" fill="#c9a51c"/><circle cx="17.5" cy="17.5" r="2.3" fill="none" stroke="#fff" stroke-width="1.3"/><path d="M17.5 13.7V21.3M13.7 17.5H21.3M14.8 14.8L20.2 20.2M20.2 14.8L14.8 20.2" stroke="#fff" stroke-width="0.9"/></svg>
<svg style="left:163.0px;top:84.0px" width="24" height="24" viewBox="0 0 24 24"><path d="M3 4H17L21 8V20H3Z" fill="#fff" stroke="#777"/><rect x="5" y="6" width="13" height="12" fill="#f3f3f3" stroke="#aaa" stroke-width="0.6"/><path d="M9 9L19 20" stroke="#555" stroke-width="3.6"/><path d="M10 10L19 19.5" stroke="#e1d28a" stroke-width="2"/><circle cx="9" cy="8.5" r="3" fill="#fff" stroke="#555" stroke-width="1.3"/></svg>
<svg style="left:195.4px;top:84.0px" width="24" height="24" viewBox="0 0 24 24"><circle cx="7" cy="6.5" r="4.5" fill="#d9622b"/><path d="M13.5 10.5L21 3" stroke="#5b84c0" stroke-width="2.6" stroke-linecap="round"/><rect x="2.5" y="13" width="9" height="9" fill="#7fab80"/><text x="13" y="21.5" font-size="10" font-family="Liberation Sans" fill="#444">a</text></svg>
<div style="position:absolute;left:241px;top:81px;width:32px;height:31px;background:#dcdcdc;border:1px solid #c2c2c2;border-radius:3px"></div>
<svg style="left:245.0px;top:84.0px" width="24" height="24" viewBox="0 0 24 24"><g stroke="#111" stroke-linecap="round" fill="#111"><path d="M8.2 13V5.5M10.8 12V3.2M13.4 12V4M16 13V6.5M8 16.5L4.5 13" stroke-width="3.6" fill="none"/><path d="M7.5 12H16.8V16C16.8 19 15.5 20.5 14 21.5H9.5C8.5 20 7.5 18.5 7.5 16Z" stroke-width="1.3"/></g><g stroke="#fff" stroke-linecap="round" fill="#fff"><path d="M8.2 13V5.5M10.8 12V3.2M13.4 12V4M16 13V6.5M8 16.5L4.5 13" stroke-width="1.6" fill="none"/><path d="M8.2 12.6H16.2V16C16.2 18.6 15.2 20 13.7 20.8H9.8C9 19.6 8.2 18.4 8.2 16Z" stroke-width="0"/></g></svg>
<svg style="left:278.0px;top:84.0px" width="24" height="24" viewBox="0 0 24 24"><path d="M12 1L16 5H13.5V10.5H19V8L23 12L19 16V13.5H13.5V19H16L12 23L8 19H10.5V13.5H5V16L1 12L5 8V10.5H10.5V5H8Z" fill="#d3d3d3"/></svg>
<svg style="left:310.4px;top:84.0px" width="24" height="24" viewBox="0 0 24 24"><path d="M2.5 21.5L8.5 15.5" stroke="#333" stroke-width="4.2" stroke-linecap="square"/><path d="M2.8 21.2L8.2 15.8" stroke="#e8d34a" stroke-width="2.4"/><circle cx="14" cy="10" r="7.5" fill="#f2f2f2" stroke="#6d6d6d" stroke-width="1.5"/><path d="M14 6V14M10 10H18" stroke="#4b7fbd" stroke-width="2.4"/></svg>
<svg style="left:343.5px;top:84.0px" width="24" height="24" viewBox="0 0 24 24"><path d="M2.5 21.5L8.5 15.5" stroke="#333" stroke-width="4.2" stroke-linecap="square"/><path d="M2.8 21.2L8.2 15.8" stroke="#e8d34a" stroke-width="2.4"/><circle cx="14" cy="10" r="7.5" fill="#f2f2f2" stroke="#6d6d6d" stroke-width="1.5"/><path d="M10 10H18" stroke="#4b7fbd" stroke-width="2.4"/></svg>
<svg style="left:376.6px;top:84.0px" width="24" height="24" viewBox="0 0 24 24"><path d="M10 1H23V14" fill="none"/><path d="M1 1H8L5.5 3.5L8.5 6.5L6.5 8.5L3.5 5.5L1 8Z" fill="#5c8ac4"/><path d="M23 1V8L20.5 5.5L17.5 8.5L15.5 6.5L18.5 3.5L16 1Z" fill="#5c8ac4"/><path d="M23 23H16L18.5 20.5L15.5 17.5L17.5 15.5L20.5 18.5L23 16Z" fill="#5c8ac4"/><path d="M2.5 21.5L8.5 15.5" stroke="#333" stroke-width="4.2" stroke-linecap="square"/><path d="M2.8 21.2L8.2 15.8" stroke="#e8d34a" stroke-width="2.4"/><circle cx="14" cy="10" r="7.5" fill="#f2f2f2" stroke="#6d6d6d" stroke-width="1.5"/></svg>
<svg style="left:409.6px;top:84.0px" width="24" height="24" viewBox="0 0 24 24"><path d="M2.5 21.5L8.5 15.5" stroke="#cdcdcd" stroke-width="3.5"/><circle cx="14" cy="10" r="7.5" fill="#f0f0f0" stroke="#cdcdcd" stroke-width="1.5"/><rect x="1" y="3" width="7" height="8" fill="none" stroke="#cdcdcd"/></svg>
<svg style="left:442.7px;top:84.0px" width="24" height="24" viewBox="0 0 24 24"><rect x="1.5" y="3" width="8" height="9" fill="#eee" stroke="#6a6a6a"/><path d="M2.5 21.5L8.5 15.5" stroke="#333" stroke-width="4.2" stroke-linecap="square"/><path d="M2.8 21.2L8.2 15.8" stroke="#e8d34a" stroke-width="2.4"/><circle cx="14" cy="10" r="7.5" fill="#f2f2f2" stroke="#6d6d6d" stroke-width="1.5"/><path d="M14 5V15" stroke="#888" stroke-width="1"/></svg>
<svg style="left:475.7px;top:84.0px" width="24" height="24" viewBox="0 0 24 24"><path d="M2.5 21.5L8.5 15.5" stroke="#cdcdcd" stroke-width="3.5"/><circle cx="14" cy="10" r="7.5" fill="#f0f0f0" stroke="#cdcdcd" stroke-width="1.5"/><text x="9.5" y="13.5" font-size="8" font-weight="bold" font-family="Liberation Sans" fill="#cdcdcd">1:1</text></svg>
<svg style="left:508.8px;top:84.0px" width="24" height="24" viewBox="0 0 24 24"><path d="M2.5 21.5L8.5 15.5" stroke="#cdcdcd" stroke-width="3.5"/><circle cx="14" cy="10" r="7.5" fill="#f0f0f0" stroke="#cdcdcd" stroke-width="1.5"/><path d="M12 19H22V13H12Z" fill="#dcdcdc"/><path d="M19 14L15 16L19 18" fill="none" stroke="#fff" stroke-width="1.2"/></svg>
<svg style="left:541.8px;top:84.0px" width="24" height="24" viewBox="0 0 24 24"><path d="M2.5 21.5L8.5 15.5" stroke="#cdcdcd" stroke-width="3.5"/><circle cx="14" cy="10" r="7.5" fill="#f0f0f0" stroke="#cdcdcd" stroke-width="1.5"/><path d="M12 19H22V13H12Z" fill="#dcdcdc"/><path d="M19 14L15 16L19 18" fill="none" stroke="#fff" stroke-width="1.2"/></svg>
<svg style="left:574.9px;top:84.0px" width="24" height="24" viewBox="0 0 24 24"><path d="M4 3H18V19H4Z" fill="#e4e4e4" stroke="#8a8a8a"/><path d="M2 4C2 2 4 2 4 3V21C4 22 2 22 2 20Z" fill="#d0d0d0" stroke="#8a8a8a" stroke-width="0.8"/><rect x="12" y="13" width="10" height="10" rx="1.5" fill="#c9a51c"/><circle cx="17" cy="18" r="2.3" fill="none" stroke="#fff" stroke-width="1.3"/><path d="M17 14.2V21.8M13.2 18H20.8M14.3 15.3L19.7 20.7M19.7 15.3L14.3 20.7" stroke="#fff" stroke-width="0.9"/></svg>
<svg style="left:608.6px;top:84.0px" width="24" height="24" viewBox="0 0 24 24"><path d="M2 16L6 7L20 6L22 14L15 19Z" fill="#e6e6e6" stroke="#9c9c9c" stroke-width="0.9"/><path d="M6 10L19 9M5 13L20 12M10 7L12 17" stroke="#c0c0c0" stroke-width="0.6"/><rect x="12" y="13" width="10" height="10" rx="1.5" fill="#c9a51c"/><circle cx="17" cy="18" r="2.3" fill="none" stroke="#fff" stroke-width="1.3"/><path d="M17 14.2V21.8M13.2 18H20.8M14.3 15.3L19.7 20.7M19.7 15.3L14.3 20.7" stroke="#fff" stroke-width="0.9"/></svg>
<svg style="left:642.9px;top:84.0px" width="24" height="24" viewBox="0 0 24 24"><path d="M5 2H12V20L8.5 16L5 19Z" fill="#5c8ac4" stroke="#335f97" stroke-width="0.9"/><rect x="11.5" y="13" width="10" height="10" rx="1.5" fill="#c9a51c"/><circle cx="16.5" cy="18" r="2.3" fill="none" stroke="#fff" stroke-width="1.3"/><path d="M16.5 14.2V21.8M12.7 18H20.3M13.8 15.3L19.2 20.7M19.2 15.3L13.8 20.7" stroke="#fff" stroke-width="0.9"/></svg>
<svg style="left:674.3px;top:84.0px" width="24" height="24" viewBox="0 0 24 24"><path d="M4 3H19V21H4Z" fill="#e4e4e4" stroke="#8a8a8a"/><path d="M2 4C2 2 4 2 4 3V21C4 22 2 22 2 20Z" fill="#d0d0d0" stroke="#8a8a8a" stroke-width="0.8"/><path d="M12 2H16V9L14 7L12 9Z" fill="#6d95c9" stroke="#3f6aa3" stroke-width="0.7"/></svg>
<svg style="left:706.7px;top:84.0px" width="24" height="24" viewBox="0 0 24 24"><circle cx="12" cy="12" r="10" fill="#fafafa" stroke="#555" stroke-width="1.4"/><path d="M12 5V12L16 15" fill="none" stroke="#555" stroke-width="1.3"/></svg>
<svg style="left:739.7px;top:84.0px" width="24" height="24" viewBox="0 0 24 24"><path d="M3 11A9 8 0 0 1 19 6L22 3V12H13L16 9A5 4.5 0 0 0 8 11Z" fill="#3d80c8"/><path d="M21 13A9 8 0 0 1 5 18L2 21V12H11L8 15A5 4.5 0 0 0 16 13Z" fill="#5b9ad6"/></svg>
<svg style="left:788.3px;top:84.0px" width="24" height="24" viewBox="0 0 24 24"><circle cx="9" cy="9" r="7.5" fill="#5d8fcb" stroke="#406ea8" stroke-width="0.8"/><text x="6.8" y="14" font-size="11" font-style="italic" font-weight="bold" font-family="Liberation Serif" fill="#fff">i</text><path d="M12 11L21 18L17 18.5L19.5 22.5L17.5 23.5L15 19.5L12 22Z" fill="#fff" stroke="#222" stroke-width="0.9"/></svg>
<svg style="left:821.4px;top:84.0px" width="24" height="24" viewBox="0 0 24 24"><path d="M3 2V21M21 2V21M2 22H22" stroke="#555" stroke-width="1.5"/><path d="M3 5H21M3 11H21M3 17H21" stroke="#777" stroke-width="0.8"/><g fill="none" stroke-width="1.2"><path d="M8 3L10 5L8 7L6 5ZM15 3L17 5L15 7L13 5Z" stroke="#d23b3b"/><path d="M8 9L10 11L8 13L6 11ZM12 9L14 11L12 13L10 11Z" stroke="#49a449"/><path d="M8 15L10 17L8 19L6 17ZM12 15L14 17L12 19L10 17ZM16 15L18 17L16 19L14 17Z" stroke="#4b84c2"/></g></svg>
<svg style="left:855.0px;top:84.0px" width="24" height="24" viewBox="0 0 24 24"><path d="M12 1L13.8 5L18 3L17.6 7.4L22 8.5L19.2 12L22 15.5L17.6 16.6L18 21L13.8 19L12 23L10.2 19L6 21L6.4 16.6L2 15.5L4.8 12L2 8.5L6.4 7.4L6 3L10.2 5Z" fill="#6d9ad4" stroke="#4b78b3" stroke-width="0.6"/><circle cx="12" cy="12" r="3" fill="#f0f0f0"/></svg>
<svg style="left:887.5px;top:84.0px" width="24" height="24" viewBox="0 0 24 24"><path d="M4 2H20V7H18L17 4.5H9L14.5 11.5L8.5 19H17.5L19 16.5H21L20 22H3.5V20.5L10.5 12L3.5 3.5Z" fill="#8a1a9a"/></svg>
<svg style="left:920.6px;top:84.0px" width="24" height="24" viewBox="0 0 24 24"><rect x="2.5" y="2.5" width="19" height="19" fill="#fff" stroke="#6b9ad2" stroke-width="1.2"/><rect x="2.5" y="2.5" width="19" height="4" fill="#cfe0f4"/><path d="M5 5H9M11 5H19M5 10H9M11 10H19M5 14H9M11 14H19M5 18H9M11 18H19" stroke="#5e8fce" stroke-width="1.2"/></svg>
<svg style="left:965.2px;top:84.0px" width="24" height="24" viewBox="0 0 24 24"><path d="M3 4H21M3 2V6M21 2V6" stroke="#233f6a" stroke-width="1.5"/><rect x="2" y="10" width="20" height="9" rx="1" fill="#c9c9c9" stroke="#6d6d6d" stroke-width="1"/><path d="M5 10V14M8 10V13M11 10V15M14 10V13M17 10V14M20 10V13" stroke="#555" stroke-width="0.9"/></svg>
<svg style="left:1010.8px;top:84.0px" width="24" height="24" viewBox="0 0 24 24"><path d="M4 2H20C22 2 23 3 23 5V11C23 13 22 14 20 14H13L9 19V14H4C2 14 1 13 1 11V5C1 3 2 2 4 2Z" fill="#f6e47a" stroke="#d4b93a" stroke-width="1"/><circle cx="5.5" cy="19.5" r="3" fill="#6d9d6d" stroke="#4a7a4a" stroke-width="0.7"/></svg>
<svg style="left:1042.9px;top:84.0px" width="24" height="24" viewBox="0 0 24 24"><path d="M11 2L13 5L16 4L16.5 7.5L20 8.5L18 11.5L20 14.5L16.5 15.5L16 19L13 18L11 21L9 18L6 19L5.5 15.5L2 14.5L4 11.5L2 8.5L5.5 7.5L6 4L9 5Z" fill="#dedede" stroke="#bdbdbd" stroke-width="0.8"/><circle cx="11" cy="11.5" r="3.5" fill="#cfcfcf"/><path d="M13 13L21 20L18 20L20 23" fill="none" stroke="#cdcdcd" stroke-width="1.2"/></svg>
<svg style="left:1104.0px;top:84.0px" width="24" height="24" viewBox="0 0 24 24"><rect x="2" y="2" width="17" height="17" fill="#dedede" stroke="#333" stroke-dasharray="2 1.4" stroke-width="1"/><rect x="2.5" y="2.5" width="11" height="12" fill="#f1dc3e" stroke="#c7ad1e" stroke-width="0.6"/><path d="M10 9L20 17L16 17.5L18.5 22L16.5 23L14 18.5L11 21Z" fill="#fff" stroke="#222" stroke-width="0.9"/></svg>
<svg style="left:1149.6px;top:84.0px" width="24" height="24" viewBox="0 0 24 24"><rect x="9.5" y="9" width="12" height="13" fill="#f4dc3c" stroke="#c7ad1e" stroke-width="0.8"/><path d="M12 3C10 1 3.5 1.2 3.5 5C3.5 7.5 6 8.3 8 8.3C5 8.3 2 9.5 2 12.3C2 16 9 16.5 12.5 13.8" fill="none" stroke="#4b2d7f" stroke-width="2"/><path d="M11 1.5L13 4" stroke="#4b2d7f" stroke-width="1.5"/></svg>
<svg style="left:1195.0px;top:84.0px" width="24" height="24" viewBox="0 0 24 24"><rect x="2" y="2" width="11" height="11" fill="#f4dc3c" stroke="#c7ad1e" stroke-width="0.8"/><rect x="6" y="6" width="12" height="12" fill="#f4dc3c" stroke="#c7ad1e" stroke-width="0.8"/><rect x="13.5" y="14" width="9" height="9" rx="2" fill="#d42f2f"/><path d="M16 20.5L20.5 16" stroke="#fff" stroke-width="1.4"/></svg>
<svg style="left:1238.0px;top:84.0px" width="24" height="24" viewBox="0 0 24 24"><rect x="2" y="2" width="13" height="13" fill="#f4dc3c" stroke="#c7ad1e" stroke-width="0.8"/><path d="M19 11A3 3 0 0 1 22 14C22 16 19 20 19 20C19 20 16 16 16 14A3 3 0 0 1 19 11Z" fill="#5a8fb8"/><circle cx="19" cy="14" r="1" fill="#fff"/></svg>
<svg style="left:1301.0px;top:84.0px" width="24" height="24" viewBox="0 0 24 24"><path d="M2 3H8L12 8L18 9L21 13" fill="none" stroke="#3a5f93" stroke-width="0.9"/><text x="1" y="19" font-size="16" font-weight="bold" font-style="italic" font-family="Liberation Sans" fill="#5582bf" stroke="#2e5486" stroke-width="0.5">A</text><path d="M17 1L18 3.5H20.5L18.5 5L19.3 7.5L17 6L14.7 7.5L15.5 5L13.5 3.5H16Z" fill="#5582bf"/><rect x="13" y="14" width="10" height="10" rx="1.5" fill="#c9a51c"/><circle cx="18" cy="19" r="2.3" fill="none" stroke="#fff" stroke-width="1.3"/><path d="M18 15.2V22.8M14.2 19H21.8M15.3 16.3L20.7 21.7M20.7 16.3L15.3 21.7" stroke="#fff" stroke-width="0.9"/></svg>
<svg style="left:1344.7px;top:84.0px" width="24" height="24" viewBox="0 0 24 24"><rect x="2.5" y="3" width="18" height="17" fill="none" stroke="#444" stroke-dasharray="1.2 1.6" stroke-width="1"/><path d="M5 3L18 14L13 14.5L16.5 21L14 22L11 15.5L6.5 19Z" fill="#fff" stroke="#222" stroke-width="1"/></svg>
<svg style="left:1378.7px;top:84.0px" width="24" height="24" viewBox="0 0 24 24"><path d="M3 4L16 3L9 20L4 16Z" fill="none" stroke="#222" stroke-width="1.1"/><circle cx="3" cy="4" r="2.2" fill="#3a7be0"/><circle cx="16" cy="3" r="2.2" fill="#3a7be0"/><circle cx="9" cy="20" r="2.2" fill="#3a7be0"/><circle cx="4" cy="16" r="2.2" fill="#3a7be0"/><rect x="14" y="14" width="9.5" height="9.5" rx="1.5" fill="#4f9a4f" stroke="#3c7a3c" stroke-width="0.6"/><path d="M18.75 16V21.5M16 18.75H21.5" stroke="#fff" stroke-width="1.8"/></svg>
<svg style="left:1411.8px;top:84.0px" width="24" height="24" viewBox="0 0 24 24"><path d="M16 3H6L2 10L8 20" fill="none" stroke="#222" stroke-width="1.1"/><circle cx="16" cy="3" r="2.2" fill="#3a7be0"/><circle cx="6" cy="3" r="2.2" fill="#3a7be0"/><circle cx="2.5" cy="10" r="2.2" fill="#3a7be0"/><circle cx="8" cy="20" r="2.2" fill="#3a7be0"/></svg>
<svg style="left:1444.9px;top:84.0px" width="24" height="24" viewBox="0 0 24 24"><path d="M10 1L12.8 7.5L19.5 8L14.5 12.5L16 19L10 15.5L4 19L5.5 12.5L0.5 8L7.2 7.5Z" fill="#f7dc8e" stroke="#e0b84a" stroke-width="0.9"/><rect x="14" y="14" width="9.5" height="9.5" rx="1.5" fill="#4f9a4f" stroke="#3c7a3c" stroke-width="0.6"/><path d="M18.75 16V21.5M16 18.75H21.5" stroke="#fff" stroke-width="1.8"/></svg>
<svg style="left:1478.0px;top:84.0px" width="24" height="24" viewBox="0 0 24 24"><text x="5" y="15" font-size="15" font-weight="bold" font-family="Liberation Serif" fill="#333">T</text><rect x="1" y="17" width="3" height="3" fill="none" stroke="#777" stroke-width="0.8"/><rect x="14" y="14" width="9.5" height="9.5" rx="1.5" fill="#4f9a4f" stroke="#3c7a3c" stroke-width="0.6"/><path d="M18.75 16V21.5M16 18.75H21.5" stroke="#fff" stroke-width="1.8"/></svg>
<svg style="left:1511.0px;top:84.0px" width="24" height="24" viewBox="0 0 24 24"><text x="1" y="11" font-size="8" font-weight="bold" font-family="Liberation Sans" fill="#444">a</text><text x="8" y="8" font-size="8" font-weight="bold" font-family="Liberation Sans" fill="#444">b</text><text x="15" y="9" font-size="8" font-weight="bold" font-family="Liberation Sans" fill="#444">c</text><rect x="1" y="15" width="3" height="3" fill="none" stroke="#888" stroke-width="0.8"/><rect x="9" y="11" width="3" height="3" fill="none" stroke="#888" stroke-width="0.8"/><rect x="14" y="14" width="9.5" height="9.5" rx="1.5" fill="#4f9a4f" stroke="#3c7a3c" stroke-width="0.6"/><path d="M18.75 16V21.5M16 18.75H21.5" stroke="#fff" stroke-width="1.8"/></svg>
<svg style="left:1544.0px;top:84.0px" width="24" height="24" viewBox="0 0 24 24"><rect x="1.5" y="1.5" width="17" height="17" fill="#fff" stroke="#777"/><text x="4" y="15" font-size="15" font-weight="bold" font-family="Liberation Serif" fill="#333">T</text><rect x="14" y="14" width="9.5" height="9.5" rx="1.5" fill="#4f9a4f" stroke="#3c7a3c" stroke-width="0.6"/><path d="M18.75 16V21.5M16 18.75H21.5" stroke="#fff" stroke-width="1.8"/></svg>
<svg style="left:1577.0px;top:84.0px" width="24" height="24" viewBox="0 0 24 24"><rect x="1" y="4" width="20" height="14" fill="#8fb6e0"/><path d="M1 13C6 8 12 7 21 9V18H1Z" fill="#d9b64a"/><path d="M1 16C8 12 14 12 21 13V18H1Z" fill="#b99a3a"/><rect x="14" y="14" width="9.5" height="9.5" rx="1.5" fill="#4f9a4f" stroke="#3c7a3c" stroke-width="0.6"/><path d="M18.75 16V21.5M16 18.75H21.5" stroke="#fff" stroke-width="1.8"/></svg>
<svg style="left:1616.8px;top:84.0px" width="24" height="24" viewBox="0 0 24 24"><path d="M2 2H22V16H9L4 21V16H2Z" fill="#f7f7f7" stroke="#6e8fb7" stroke-width="1"/><path d="M4 6H9M4 9H8M4 12H9" stroke="#5c86c2" stroke-width="1.3"/><text x="8.5" y="11.5" font-size="8" font-weight="bold" font-family="Liberation Mono" fill="#222">&lt;/&gt;</text></svg>
<svg style="left:1676.3px;top:84.0px" width="24" height="24" viewBox="0 0 24 24"><path d="M5 6H23V17H5L1 11.5Z" fill="#f5e03a" stroke="#c7b01a" stroke-width="1.1"/><text x="5.5" y="15" font-size="9.5" font-weight="bold" font-family="Liberation Sans" fill="#333">abc</text></svg>
<svg style="left:1711.0px;top:84.0px" width="24" height="24" viewBox="0 0 24 24"><circle cx="9" cy="9" r="7.5" fill="#dc2c2c"/><path d="M9 9L9 1.5A7.5 7.5 0 0 1 15.8 5.8Z" fill="#f1d43a"/><path d="M9 9L9 1.5A7.5 7.5 0 0 0 1.7 11Z" fill="#3aa13a"/><rect x="8" y="17" width="4" height="6" fill="#f1d43a"/><rect x="12" y="12" width="3.5" height="11" fill="#2b9a3a"/><rect x="15.5" y="16" width="4" height="7" fill="#c42020"/></svg>
<svg style="left:1749.0px;top:84.0px" width="24" height="24" viewBox="0 0 24 24"><path d="M5 6H21V17H5L1 11.5Z" fill="#bcd4ee" stroke="#5b86bd" stroke-width="1.1"/><text x="5.5" y="15" font-size="9.5" font-weight="bold" font-family="Liberation Sans" fill="#2a3a5a">ab</text><path d="M16 12V16" stroke="#777" stroke-width="1"/><circle cx="17" cy="19" r="3.5" fill="#b51d1d"/></svg>
<svg style="left:1782.0px;top:84.0px" width="24" height="24" viewBox="0 0 24 24"><path d="M5 6H23V17H5L1 11.5Z" fill="#fde8e8" stroke="#d22c2c" stroke-width="1.1"/><text x="5.5" y="15" font-size="9.5" font-weight="bold" font-family="Liberation Sans" fill="#d22c2c">abc</text></svg>
<svg style="left:1823.4px;top:84.0px" width="24" height="24" viewBox="0 0 24 24"><path d="M5 6H21V17H5L1 11.5Z" fill="#ececec" stroke="#cfcfcf" stroke-width="1.1"/><text x="5.5" y="15" font-size="9.5" font-weight="bold" font-family="Liberation Sans" fill="#cfcfcf">ab</text><circle cx="17" cy="19" r="3.5" fill="#d0d0d0"/></svg>
<svg style="left:1856.4px;top:84.0px" width="24" height="24" viewBox="0 0 24 24"><path d="M5 6H23V17H5L1 11.5Z" fill="#ececec" stroke="#cfcfcf" stroke-width="1.1"/><text x="5.5" y="15" font-size="9.5" font-weight="bold" font-family="Liberation Sans" fill="#cfcfcf">abc</text><path d="M9 20C12 16 17 16 20 20C17 23 12 23 9 20Z" fill="none" stroke="#cfcfcf"/><circle cx="14.5" cy="20" r="1.5" fill="#cfcfcf"/></svg>
<svg style="left:1901.0px;top:84.0px" width="24" height="24" viewBox="0 0 24 24"><path d="M6 8L10 12L6 16M12 8L16 12L12 16" fill="none" stroke="#333" stroke-width="1.5"/></svg>
<svg style="left:1411.8px;top:84px" width="24" height="24" viewBox="0 0 24 24"><rect x="14" y="14" width="9.5" height="9.5" rx="1.5" fill="#4f9a4f" stroke="#3c7a3c" stroke-width="0.6"/><path d="M18.75 16V21.5M16 18.75H21.5" stroke="#fff" stroke-width="1.8"/></svg>
<svg style="left:949.7px;top:93px" width="10" height="6" viewBox="0 0 10 6"><path d="M1 1H9L5 5Z" fill="#505050"/></svg>
<svg style="left:994.7px;top:93px" width="10" height="6" viewBox="0 0 10 6"><path d="M1 1H9L5 5Z" fill="#505050"/></svg>
<svg style="left:1133.5px;top:93px" width="10" height="6" viewBox="0 0 10 6"><path d="M1 1H9L5 5Z" fill="#505050"/></svg>
<svg style="left:1178.8px;top:93px" width="10" height="6" viewBox="0 0 10 6"><path d="M1 1H9L5 5Z" fill="#505050"/></svg>
<svg style="left:1223.4px;top:93px" width="10" height="6" viewBox="0 0 10 6"><path d="M1 1H9L5 5Z" fill="#505050"/></svg>
<svg style="left:1268px;top:93px" width="10" height="6" viewBox="0 0 10 6"><path d="M1 1H9L5 5Z" fill="#505050"/></svg>
<svg style="left:1329.5px;top:93px" width="10" height="6" viewBox="0 0 10 6"><path d="M1 1H9L5 5Z" fill="#505050"/></svg>
<svg style="left:1645px;top:93px" width="10" height="6" viewBox="0 0 10 6"><path d="M1 1H9L5 5Z" fill="#505050"/></svg>
<svg style="left:1073px;top:93px" width="10" height="6" viewBox="0 0 10 6"><path d="M1 1H9L5 5Z" fill="#d0d0d0"/></svg>
<div style="position:absolute;left:1609px;top:85.0px;width:1px;height:22px;background:#d2d2d2"></div>
<div style="position:absolute;left:1742.8px;top:85.0px;width:1px;height:22px;background:#d2d2d2"></div>
<div style="position:absolute;left:1815.5px;top:85.0px;width:1px;height:22px;background:#d2d2d2"></div>
<svg style="left:19px;top:128px" width="6" height="16" viewBox="0 0 6 16"><rect x="0" y="0" width="1" height="1" fill="#b9b9b9"/><rect x="0" y="3.5" width="1" height="1" fill="#b9b9b9"/><rect x="0" y="7" width="1" height="1" fill="#b9b9b9"/><rect x="0" y="10.5" width="1" height="1" fill="#b9b9b9"/><rect x="0" y="14" width="1" height="1" fill="#b9b9b9"/><rect x="4" y="0" width="1" height="1" fill="#b9b9b9"/><rect x="4" y="3.5" width="1" height="1" fill="#b9b9b9"/><rect x="4" y="7" width="1" height="1" fill="#b9b9b9"/><rect x="4" y="10.5" width="1" height="1" fill="#b9b9b9"/><rect x="4" y="14" width="1" height="1" fill="#b9b9b9"/></svg>
<svg style="left:551px;top:128px" width="6" height="16" viewBox="0 0 6 16"><rect x="0" y="0" width="1" height="1" fill="#b9b9b9"/><rect x="0" y="3.5" width="1" height="1" fill="#b9b9b9"/><rect x="0" y="7" width="1" height="1" fill="#b9b9b9"/><rect x="0" y="10.5" width="1" height="1" fill="#b9b9b9"/><rect x="0" y="14" width="1" height="1" fill="#b9b9b9"/><rect x="4" y="0" width="1" height="1" fill="#b9b9b9"/><rect x="4" y="3.5" width="1" height="1" fill="#b9b9b9"/><rect x="4" y="7" width="1" height="1" fill="#b9b9b9"/><rect x="4" y="10.5" width="1" height="1" fill="#b9b9b9"/><rect x="4" y="14" width="1" height="1" fill="#b9b9b9"/></svg>
<svg style="left:1218px;top:128px" width="6" height="16" viewBox="0 0 6 16"><rect x="0" y="0" width="1" height="1" fill="#b9b9b9"/><rect x="0" y="3.5" width="1" height="1" fill="#b9b9b9"/><rect x="0" y="7" width="1" height="1" fill="#b9b9b9"/><rect x="0" y="10.5" width="1" height="1" fill="#b9b9b9"/><rect x="0" y="14" width="1" height="1" fill="#b9b9b9"/><rect x="4" y="0" width="1" height="1" fill="#b9b9b9"/><rect x="4" y="3.5" width="1" height="1" fill="#b9b9b9"/><rect x="4" y="7" width="1" height="1" fill="#b9b9b9"/><rect x="4" y="10.5" width="1" height="1" fill="#b9b9b9"/><rect x="4" y="14" width="1" height="1" fill="#b9b9b9"/></svg>
<svg style="left:1687px;top:128px" width="6" height="16" viewBox="0 0 6 16"><rect x="0" y="0" width="1" height="1" fill="#b9b9b9"/><rect x="0" y="3.5" width="1" height="1" fill="#b9b9b9"/><rect x="0" y="7" width="1" height="1" fill="#b9b9b9"/><rect x="0" y="10.5" width="1" height="1" fill="#b9b9b9"/><rect x="0" y="14" width="1" height="1" fill="#b9b9b9"/><rect x="4" y="0" width="1" height="1" fill="#b9b9b9"/><rect x="4" y="3.5" width="1" height="1" fill="#b9b9b9"/><rect x="4" y="7" width="1" height="1" fill="#b9b9b9"/><rect x="4" y="10.5" width="1" height="1" fill="#b9b9b9"/><rect x="4" y="14" width="1" height="1" fill="#b9b9b9"/></svg>
<svg style="left:31.0px;top:123.5px" width="24" height="24" viewBox="0 0 24 24"><path d="M3 10L9 4L14.5 9.5C16.5 11.5 16.5 13.5 14.5 15.5C12.5 17.5 10.5 17.5 8.5 15.5L5.5 12.5Z" fill="none"/><path d="M4.5 11L9.5 16C12.5 19 16 19 18.5 16.5C21 14 21 10.5 18 7.5L13 2.5L9.8 5.7L14.8 10.7C16 11.9 16 13 15 14C14 15 12.9 15 11.7 13.8L6.7 8.8Z" fill="#cc1414" stroke="#8a0b0b" stroke-width="0.7"/><path d="M4.5 11L6.7 8.8L8.6 10.7L6.4 12.9ZM13 2.5L9.8 5.7L11.7 7.6L14.9 4.4Z" fill="#f4f4f4" stroke="#8a0b0b" stroke-width="0.6"/></svg>
<svg style="left:64.8px;top:123.5px" width="24" height="24" viewBox="0 0 24 24"><path d="M3 2L10 19L14 7L20 4M14 7L21 10" fill="none" stroke="#cdcdcd" stroke-width="1.3"/><circle cx="3" cy="2.5" r="1.6" fill="none" stroke="#cdcdcd"/><circle cx="20" cy="4" r="1.6" fill="none" stroke="#cdcdcd"/><circle cx="21" cy="10" r="1.6" fill="none" stroke="#cdcdcd"/><circle cx="10" cy="19" r="1.6" fill="none" stroke="#cdcdcd"/></svg>
<svg style="left:82px;top:143px" width="10" height="6" viewBox="0 0 10 6"><path d="M1 1H9L5 5Z" fill="#c8c8c8"/></svg>
<div style="position:absolute;left:93px;top:121px;width:32px;height:30px;background:#dedede;border:1px solid #cfcfcf;border-radius:3px"></div>
<svg style="position:absolute;left:93px;top:121px" width="32" height="30" viewBox="0 0 32 30"><circle cx="11" cy="8.5" r="1.8" fill="none" stroke="#c0c0c0"/><circle cx="23" cy="10.5" r="1.8" fill="none" stroke="#c0c0c0"/><circle cx="17" cy="18.5" r="1.8" fill="none" stroke="#c0c0c0"/><path d="M25 25L28 25L26.5 27Z" fill="#c8c8c8"/></svg>
<div style="position:absolute;left:126px;top:121px;width:124px;height:30px;background:#ebebeb;border:1px solid #c6c6c6;border-radius:3px"></div>
<div style="position:absolute;left:236px;top:122px;width:1px;height:28px;background:#d4d4d4"></div>
<svg style="position:absolute;left:238px;top:124px" width="11" height="24" viewBox="0 0 11 24"><path d="M2 7L5.5 3.5L9 7Z" fill="#cfcfcf"/><path d="M2 17L5.5 20.5L9 17Z" fill="#cfcfcf"/></svg>
<div class="t" style="left:131.0px;top:129.96px;font-size:16px;letter-spacing:0.344px;font-weight:400;color:#b8b8b8;font-family:'Liberation Sans',sans-serif;">12</div>
<div style="position:absolute;left:251px;top:121px;width:113px;height:30px;background:#efefef;border:1px solid #d2d2d2;border-radius:3px"></div>
<div class="t" style="left:256.0px;top:129.96px;font-size:16px;letter-spacing:1.047px;font-weight:400;color:#b8b8b8;font-family:'Liberation Sans',sans-serif;">px</div>
<svg style="position:absolute;left:346px;top:133px" width="10" height="6" viewBox="0 0 10 6"><path d="M1 1H9L5 5Z" fill="#cfcfcf"/></svg>
<svg style="left:369.0px;top:123.5px" width="24" height="24" viewBox="0 0 24 24"><path d="M3 3L10 11V22M10 11L22 6" fill="none" stroke="#5a9a6a" stroke-width="1.5"/><circle cx="10" cy="11" r="2" fill="#fff" stroke="#6b6b6b" stroke-width="1.3"/></svg>
<svg style="left:402.0px;top:123.5px" width="24" height="24" viewBox="0 0 24 24"><path d="M13 4C17 2 22 3 22 7C22 11 18 13 15 12L14 7Z" fill="#c0c0c0" stroke="#333" stroke-width="0.8"/><path d="M3 6C3 2 8 1 11 3C14 5 13 9 15 13C17 17 17 22 12 22C8 22 8 18 7 15C6 12 3 10 3 6Z" fill="#7dbd7a" stroke="#2d3d2d" stroke-width="0.9"/></svg>
<svg style="left:435.0px;top:123.5px" width="24" height="24" viewBox="0 0 24 24"><path d="M3 3L21 21M21 3L3 21" stroke="#cdcdcd" stroke-width="1.6"/></svg>
<svg style="left:468.0px;top:123.5px" width="24" height="24" viewBox="0 0 24 24"><path d="M3 3C8 9 10 11 12 12C14 11 17 7 21 3M3 21C8 15 10 13 12 12C14 13 17 17 21 21" fill="none" stroke="#cdcdcd" stroke-width="1.6"/><path d="M7 9L12 12L17 9L12 15Z" fill="#cdcdcd"/></svg>
<svg style="left:511.0px;top:123.5px" width="24" height="24" viewBox="0 0 24 24"><path d="M3 20L6 5L18 18L21 4" fill="none" stroke="#cdcdcd" stroke-width="1.8"/><path d="M13 2L20 10" stroke="#cdcdcd" stroke-width="3"/></svg>
<svg style="left:562.0px;top:123.5px" width="24" height="24" viewBox="0 0 24 24"><path d="M2 2L20 21H2Z" fill="#e2e2e2" stroke="#bdbdbd" stroke-width="1"/><path d="M6 12L11 17H6Z" fill="#f2f2f2" stroke="#bdbdbd" stroke-width="0.8"/><rect x="17" y="2" width="5" height="19" fill="#e2e2e2" stroke="#bdbdbd" stroke-width="0.8"/></svg>
<svg style="left:597.0px;top:123.5px" width="24" height="24" viewBox="0 0 24 24"><path d="M3 7C3 3 7 2 10 3.5C13 5 15 2.5 18 3C21.5 3.5 22 8 19.5 10C17 12 14 10.5 11 12C8 13.5 3 12 3 7Z" fill="#d6d6d6" stroke="#c6c6c6" stroke-width="0.8"/><rect x="13.5" y="13.5" width="9.5" height="9.5" rx="1.5" fill="#cbcbcb"/><path d="M15.5 18.25H21M18.5 16L21 18.25L18.5 20.5" fill="none" stroke="#eee" stroke-width="1.2"/></svg>
<svg style="left:641.1px;top:123.5px" width="24" height="24" viewBox="0 0 24 24"><path d="M3 7C3 3 7 2 10 3.5C13 5 15 2.5 18 3C21.5 3.5 22 8 19.5 10C17 12 14 10.5 11 12C8 13.5 3 12 3 7Z" fill="#d6d6d6" stroke="#c6c6c6" stroke-width="0.8"/><rect x="13.5" y="13.5" width="9.5" height="9.5" rx="1.5" fill="#cbcbcb"/><circle cx="18.25" cy="18.25" r="2" fill="none" stroke="#eee" stroke-width="1.2"/></svg>
<svg style="left:674.0px;top:123.5px" width="24" height="24" viewBox="0 0 24 24"><path d="M3 7C3 3 7 2 10 3.5C13 5 15 2.5 18 3C21.5 3.5 22 8 19.5 10C17 12 14 10.5 11 12C8 13.5 3 12 3 7Z" fill="#d6d6d6" stroke="#c6c6c6" stroke-width="0.8"/><rect x="13.5" y="13.5" width="9.5" height="9.5" rx="1.5" fill="#cbcbcb"/><path d="M15.5 18.25H21M18.5 16L21 18.25L18.5 20.5" fill="none" stroke="#eee" stroke-width="1.2"/></svg>
<svg style="left:707.0px;top:123.5px" width="24" height="24" viewBox="0 0 24 24"><circle cx="8" cy="8" r="6.5" fill="#d6d6d6" stroke="#c6c6c6"/><path d="M12 9L19 11L21 17L16 22L10 20L9 14Z" fill="#dcdcdc" stroke="#c6c6c6"/></svg>
<svg style="left:740.2px;top:123.5px" width="24" height="24" viewBox="0 0 24 24"><path d="M3 7C3 3 7 2 10 3.5C13 5 15 2.5 18 3C21.5 3.5 22 8 19.5 10C17 12 14 10.5 11 12C8 13.5 3 12 3 7Z" fill="#d6d6d6" stroke="#c6c6c6"/><ellipse cx="8" cy="6.5" rx="3" ry="2" fill="#f2f2f2" stroke="#c6c6c6" stroke-width="0.7"/><rect x="13.5" y="13.5" width="9.5" height="9.5" rx="1.5" fill="#cbcbcb"/><circle cx="18.25" cy="18.25" r="2" fill="none" stroke="#eee" stroke-width="1.2"/></svg>
<svg style="left:773.3px;top:123.5px" width="24" height="24" viewBox="0 0 24 24"><path d="M3 7C3 3 7 2 10 3.5C13 5 15 2.5 18 3C21.5 3.5 22 8 19.5 10C17 12 14 10.5 11 12C8 13.5 3 12 3 7Z" fill="#d6d6d6" stroke="#c6c6c6" stroke-width="0.8"/><path d="M3 21C2 17 6 13 9 14C11 15 8 21 3 21Z" fill="#d6d6d6"/><rect x="13.5" y="13.5" width="9.5" height="9.5" rx="1.5" fill="#cbcbcb"/><circle cx="18.25" cy="18.25" r="2" fill="none" stroke="#eee" stroke-width="1.2"/></svg>
<svg style="left:806.3px;top:123.5px" width="24" height="24" viewBox="0 0 24 24"><path d="M3 7C3 3 7 2 10 3.5C13 5 15 2.5 18 3C21.5 3.5 22 8 19.5 10C17 12 14 10.5 11 12C8 13.5 3 12 3 7Z" fill="#d6d6d6" stroke="#c6c6c6" stroke-width="0.8"/><rect x="13.5" y="13.5" width="9.5" height="9.5" rx="1.5" fill="#cbcbcb"/><circle cx="18.25" cy="18.25" r="2" fill="none" stroke="#eee" stroke-width="1.2"/></svg>
<svg style="left:839.4px;top:123.5px" width="24" height="24" viewBox="0 0 24 24"><path d="M3 7C3 3 7 2 10 3.5C13 5 15 2.5 18 3C21.5 3.5 22 8 19.5 10C17 12 14 10.5 11 12C8 13.5 3 12 3 7Z" fill="#d6d6d6" stroke="#c6c6c6" stroke-width="0.8"/><rect x="13.5" y="13.5" width="9.5" height="9.5" rx="1.5" fill="#cbcbcb"/><path d="M16 16L20.5 20.5M20.5 16L16 20.5" stroke="#eee" stroke-width="1.6"/></svg>
<svg style="left:872.5px;top:123.5px" width="24" height="24" viewBox="0 0 24 24"><path d="M3 7C3 3 7 2 10 3.5C13 5 15 2.5 18 3C21.5 3.5 22 8 19.5 10C17 12 14 10.5 11 12C8 13.5 3 12 3 7Z" fill="#d6d6d6" stroke="#c6c6c6" stroke-width="0.8"/><path d="M3 21C2 17 6 13 9 14C11 15 8 21 3 21Z" fill="#d6d6d6"/><rect x="13.5" y="13.5" width="9.5" height="9.5" rx="1.5" fill="#cbcbcb"/><circle cx="18.25" cy="18.25" r="2" fill="none" stroke="#eee" stroke-width="1.2"/></svg>
<svg style="left:905.5px;top:123.5px" width="24" height="24" viewBox="0 0 24 24"><path d="M3 5C3 2 8 2 12 3C17 4 22 3 22 7C22 11 16 9 14 12C12 15 12 21 8 21C4 21 3 14 3 5Z" fill="#d6d6d6" stroke="#c6c6c6"/></svg>
<svg style="left:938.2px;top:123.5px" width="24" height="24" viewBox="0 0 24 24"><path d="M4 18C1 15 4 9 9 5C14 1 21 2 21 6C21 10 17 12 14 16C11 20 7 21 4 18Z" fill="#d3d3d3" stroke="#c0c0c0"/></svg>
<svg style="left:970.8px;top:123.5px" width="24" height="24" viewBox="0 0 24 24"><path d="M2 2L8 15L12 7H20" fill="none" stroke="#cdcdcd" stroke-width="1.2"/><rect x="12" y="13" width="9" height="9" rx="1.5" fill="none" stroke="#cdcdcd" stroke-width="1.5"/></svg>
<svg style="left:1003.3px;top:123.5px" width="24" height="24" viewBox="0 0 24 24"><path d="M12 1V22M8 1V10M2 12H22" stroke="#cdcdcd" stroke-width="1.2"/><rect x="16" y="3" width="5" height="5" fill="none" stroke="#cdcdcd"/><circle cx="12" cy="12" r="1.8" fill="none" stroke="#cdcdcd"/></svg>
<svg style="left:1037.7px;top:123.5px" width="24" height="24" viewBox="0 0 24 24"><circle cx="7" cy="7" r="5.5" fill="#d6d6d6"/><circle cx="17" cy="7" r="5.5" fill="#d6d6d6"/><circle cx="9" cy="19.5" r="2.5" fill="none" stroke="#cdcdcd" stroke-width="1.3"/><circle cx="15" cy="19.5" r="2.5" fill="none" stroke="#cdcdcd" stroke-width="1.3"/><path d="M10 17L14 8M14 17L10 8" stroke="#cdcdcd" stroke-width="1.2"/></svg>
<svg style="left:1070.2px;top:123.5px" width="24" height="24" viewBox="0 0 24 24"><circle cx="7" cy="7" r="5.5" fill="#d6d6d6"/><circle cx="17" cy="7" r="5.5" fill="#d6d6d6"/><circle cx="9" cy="19.5" r="2.5" fill="none" stroke="#cdcdcd" stroke-width="1.3"/><circle cx="15" cy="19.5" r="2.5" fill="none" stroke="#cdcdcd" stroke-width="1.3"/><path d="M10 17L14 8M14 17L10 8" stroke="#cdcdcd" stroke-width="1.2"/></svg>
<svg style="left:1102.8px;top:123.5px" width="24" height="24" viewBox="0 0 24 24"><circle cx="7" cy="8" r="5.5" fill="#d6d6d6"/><circle cx="17" cy="8" r="5.5" fill="#d6d6d6"/><path d="M4 14L12 21M10 8H20M13 5V11" stroke="#cdcdcd" stroke-width="1.1"/></svg>
<svg style="left:1136.3px;top:123.5px" width="24" height="24" viewBox="0 0 24 24"><path d="M2 4H22M2 12H22M2 20H22M8 2V22M16 2V22" stroke="#d3d3d3" stroke-width="1"/><path d="M10 6H14M10 14H14" stroke="#c3c3c3" stroke-width="1.2"/></svg>
<svg style="left:1169.7px;top:123.5px" width="24" height="24" viewBox="0 0 24 24"><path d="M14 2V13L22 7Z" fill="#f2f2f2" stroke="#cdcdcd"/><path d="M14 13L8 22H20Z" fill="none" stroke="#cdcdcd"/><path d="M11 5A7 7 0 0 0 6 17" fill="none" stroke="#cdcdcd" stroke-width="1.2"/></svg>
<svg style="left:1229.2px;top:123.5px" width="24" height="24" viewBox="0 0 24 24"><path d="M4 21L8 3L13 5L10 22Z" fill="#d8d8d8"/><path d="M9 22L15 2L20 4L14 22Z" fill="#d2d2d2"/></svg>
<svg style="left:1262.7px;top:123.5px" width="24" height="24" viewBox="0 0 24 24"><path d="M3 22L4.5 16L17 2.5L21.5 7L9 20.5Z" fill="#efe04a" stroke="#3a3a3a" stroke-width="1"/><path d="M3 22L4.5 16L9 20.5Z" fill="#e9d7a4" stroke="#3a3a3a" stroke-width="0.8"/><path d="M3 22L3.7 19.3L5.7 21.3Z" fill="#333"/><path d="M15 4.5L19.5 9" stroke="#3a3a3a" stroke-width="0.9"/></svg>
<svg style="left:1294.4px;top:123.5px" width="24" height="24" viewBox="0 0 24 24"><rect x="2.5" y="2.5" width="19" height="19" rx="2" fill="#d8d8d8"/><rect x="6" y="3" width="12" height="7" fill="#ededed"/><rect x="6.5" y="13" width="11" height="8" fill="#ededed"/><path d="M14 22L22 14" stroke="#c8c8c8" stroke-width="3"/></svg>
<svg style="left:1327.5px;top:123.5px" width="24" height="24" viewBox="0 0 24 24"><path d="M3 21L21 3" stroke="#cdcdcd" stroke-dasharray="2 2" stroke-width="1.2"/><rect x="1" y="19" width="4" height="4" fill="none" stroke="#cdcdcd"/><rect x="19" y="1" width="4" height="4" fill="none" stroke="#cdcdcd"/></svg>
<svg style="left:1373.8px;top:123.5px" width="24" height="24" viewBox="0 0 24 24"><path d="M3 7C3 3 7 2 10 3.5C13 5 15 2.5 18 3C21.5 3.5 22 8 19.5 10C17 12 14 10.5 11 12C8 13.5 3 12 3 7Z" fill="#d6d6d6" stroke="#c6c6c6" stroke-width="0.8"/><rect x="13.5" y="13.5" width="9.5" height="9.5" rx="1.5" fill="#cbcbcb"/><circle cx="18.25" cy="18.25" r="2" fill="none" stroke="#eee" stroke-width="1.2"/></svg>
<svg style="left:1406.8px;top:123.5px" width="24" height="24" viewBox="0 0 24 24"><path d="M3 4L21 22M7 3L2 13M14 9L22 3" stroke="#cdcdcd" stroke-width="1.4"/><rect x="5" y="1" width="5" height="5" fill="none" stroke="#cdcdcd"/><text x="9" y="19" font-size="11" fill="#c9c9c9" font-family="Liberation Sans">x</text></svg>
<svg style="left:1451.5px;top:123.5px" width="24" height="24" viewBox="0 0 24 24"><rect x="2" y="3" width="18" height="18" fill="#dcdcdc"/><path d="M3 8H19M3 13H19M3 18H19" stroke="#efefef" stroke-width="1.5"/><path d="M10 22L22 4" stroke="#c8c8c8" stroke-width="2.5"/></svg>
<svg style="left:1483.5px;top:123.5px" width="24" height="24" viewBox="0 0 24 24"><rect x="5" y="7" width="14" height="15" rx="1" fill="#d8d8d8"/><rect x="3" y="4" width="18" height="3" fill="#d0d0d0"/><rect x="9" y="2" width="6" height="2" fill="#d0d0d0"/><path d="M9 10V19M12 10V19M15 10V19" stroke="#eaeaea" stroke-width="1.2"/></svg>
<svg style="left:1517.6px;top:123.5px" width="24" height="24" viewBox="0 0 24 24"><path d="M5 3L17 18M19 3L7 18" stroke="#cdcdcd" stroke-width="1.5"/><circle cx="5" cy="19" r="3" fill="none" stroke="#cdcdcd" stroke-width="1.5"/><circle cx="19" cy="19" r="3" fill="none" stroke="#cdcdcd" stroke-width="1.5"/></svg>
<svg style="left:1550.6px;top:123.5px" width="24" height="24" viewBox="0 0 24 24"><path d="M8 2H16L20 6V18H8Z" fill="#f3f3f3" stroke="#cdcdcd"/><path d="M4 6H12L16 10V22H4Z" fill="#f3f3f3" stroke="#cdcdcd"/><path d="M6 13H14M6 16H14M6 19H14" stroke="#cdcdcd" stroke-width="0.8"/></svg>
<svg style="left:1583.7px;top:123.5px" width="24" height="24" viewBox="0 0 24 24"><rect x="4" y="3" width="16" height="19" rx="1.5" fill="#e0e0e0" stroke="#cdcdcd"/><rect x="7" y="6" width="11" height="14" fill="#f5f5f5" stroke="#cdcdcd" stroke-width="0.7"/><rect x="8.5" y="1.5" width="7" height="3" fill="#d3d3d3"/></svg>
<svg style="left:1616.8px;top:123.5px" width="24" height="24" viewBox="0 0 24 24"><path d="M9 4L2 10L9 16V12C15 12 18 14 20 20C21 12 17 7 9 7Z" fill="#d6d6d6"/></svg>
<svg style="left:1649.8px;top:123.5px" width="24" height="24" viewBox="0 0 24 24"><path d="M15 4L22 10L15 16V12C9 12 6 14 4 20C3 12 7 7 15 7Z" fill="#d6d6d6"/></svg>
<svg style="left:1699.4px;top:123.5px" width="24" height="24" viewBox="0 0 24 24"><path d="M3 21V12C3 6 7 3 14 3" fill="none" stroke="#cdcdcd" stroke-width="1.8"/><rect x="1" y="19" width="4" height="4" fill="none" stroke="#cdcdcd"/><rect x="12" y="1" width="4" height="4" fill="none" stroke="#cdcdcd"/><rect x="13.5" y="13.5" width="9.5" height="9.5" rx="1.5" fill="#cbcbcb"/><circle cx="18.25" cy="18.25" r="2" fill="none" stroke="#eee" stroke-width="1.2"/></svg>
<svg style="left:1732.5px;top:123.5px" width="24" height="24" viewBox="0 0 24 24"><circle cx="9" cy="9" r="6.5" fill="none" stroke="#cdcdcd" stroke-width="2"/><circle cx="9" cy="9" r="1.5" fill="#cdcdcd"/><rect x="13.5" y="13.5" width="9.5" height="9.5" rx="1.5" fill="#cbcbcb"/><circle cx="18.25" cy="18.25" r="2" fill="none" stroke="#eee" stroke-width="1.2"/></svg>
<svg style="left:1777.0px;top:123.5px" width="24" height="24" viewBox="0 0 24 24"><ellipse cx="10" cy="9" rx="8" ry="5.5" fill="none" stroke="#cdcdcd" stroke-width="1.8"/><circle cx="7" cy="9" r="1.5" fill="#cdcdcd"/><rect x="13.5" y="13.5" width="9.5" height="9.5" rx="1.5" fill="#cbcbcb"/><circle cx="18.25" cy="18.25" r="2" fill="none" stroke="#eee" stroke-width="1.2"/></svg>
<svg style="left:1823.4px;top:123.5px" width="24" height="24" viewBox="0 0 24 24"><rect x="2" y="3" width="15" height="12" fill="none" stroke="#cdcdcd" stroke-width="1.8"/><rect x="0.5" y="1.5" width="3" height="3" fill="#cdcdcd"/><rect x="15.5" y="1.5" width="3" height="3" fill="#cdcdcd"/><rect x="13.5" y="13.5" width="9.5" height="9.5" rx="1.5" fill="#cbcbcb"/><circle cx="18.25" cy="18.25" r="2" fill="none" stroke="#eee" stroke-width="1.2"/></svg>
<svg style="left:1868.0px;top:123.5px" width="24" height="24" viewBox="0 0 24 24"><path d="M10 2L17 6V14L10 18L3 14V6Z" fill="none" stroke="#cdcdcd" stroke-width="1.8"/><rect x="13.5" y="13.5" width="9.5" height="9.5" rx="1.5" fill="#cbcbcb"/><circle cx="18.25" cy="18.25" r="2" fill="none" stroke="#eee" stroke-width="1.2"/></svg>
<svg style="left:415px;top:143px" width="10" height="6" viewBox="0 0 10 6"><path d="M1 1H9L5 5Z" fill="#333"/></svg>
<svg style="left:496.6px;top:132.5px" width="10" height="6" viewBox="0 0 10 6"><path d="M1 1H9L5 5Z" fill="#d0d0d0"/></svg>
<svg style="left:625px;top:132.5px" width="10" height="6" viewBox="0 0 10 6"><path d="M1 1H9L5 5Z" fill="#d0d0d0"/></svg>
<svg style="left:1198px;top:132.5px" width="10" height="6" viewBox="0 0 10 6"><path d="M1 1H9L5 5Z" fill="#d0d0d0"/></svg>
<svg style="left:1357.6px;top:132.5px" width="10" height="6" viewBox="0 0 10 6"><path d="M1 1H9L5 5Z" fill="#d0d0d0"/></svg>
<svg style="left:1435px;top:132.5px" width="10" height="6" viewBox="0 0 10 6"><path d="M1 1H9L5 5Z" fill="#d0d0d0"/></svg>
<svg style="left:1760.3px;top:132.5px" width="10" height="6" viewBox="0 0 10 6"><path d="M1 1H9L5 5Z" fill="#d0d0d0"/></svg>
<svg style="left:1805.6px;top:132.5px" width="10" height="6" viewBox="0 0 10 6"><path d="M1 1H9L5 5Z" fill="#d0d0d0"/></svg>
<svg style="left:1850.2px;top:132.5px" width="10" height="6" viewBox="0 0 10 6"><path d="M1 1H9L5 5Z" fill="#d0d0d0"/></svg>
<svg style="left:1895.8px;top:132.5px" width="10" height="6" viewBox="0 0 10 6"><path d="M1 1H9L5 5Z" fill="#d0d0d0"/></svg>
<svg style="left:1248px;top:143px" width="10" height="6" viewBox="0 0 10 6"><path d="M1 1H9L5 5Z" fill="#d0d0d0"/></svg>
<svg style="left:19px;top:168px" width="6" height="16" viewBox="0 0 6 16"><rect x="0" y="0" width="1" height="1" fill="#b9b9b9"/><rect x="0" y="3.5" width="1" height="1" fill="#b9b9b9"/><rect x="0" y="7" width="1" height="1" fill="#b9b9b9"/><rect x="0" y="10.5" width="1" height="1" fill="#b9b9b9"/><rect x="0" y="14" width="1" height="1" fill="#b9b9b9"/><rect x="4" y="0" width="1" height="1" fill="#b9b9b9"/><rect x="4" y="3.5" width="1" height="1" fill="#b9b9b9"/><rect x="4" y="7" width="1" height="1" fill="#b9b9b9"/><rect x="4" y="10.5" width="1" height="1" fill="#b9b9b9"/><rect x="4" y="14" width="1" height="1" fill="#b9b9b9"/></svg>
<svg style="left:634px;top:168px" width="6" height="16" viewBox="0 0 6 16"><rect x="0" y="0" width="1" height="1" fill="#b9b9b9"/><rect x="0" y="3.5" width="1" height="1" fill="#b9b9b9"/><rect x="0" y="7" width="1" height="1" fill="#b9b9b9"/><rect x="0" y="10.5" width="1" height="1" fill="#b9b9b9"/><rect x="0" y="14" width="1" height="1" fill="#b9b9b9"/><rect x="4" y="0" width="1" height="1" fill="#b9b9b9"/><rect x="4" y="3.5" width="1" height="1" fill="#b9b9b9"/><rect x="4" y="7" width="1" height="1" fill="#b9b9b9"/><rect x="4" y="10.5" width="1" height="1" fill="#b9b9b9"/><rect x="4" y="14" width="1" height="1" fill="#b9b9b9"/></svg>
<svg style="left:889px;top:168px" width="6" height="16" viewBox="0 0 6 16"><rect x="0" y="0" width="1" height="1" fill="#b9b9b9"/><rect x="0" y="3.5" width="1" height="1" fill="#b9b9b9"/><rect x="0" y="7" width="1" height="1" fill="#b9b9b9"/><rect x="0" y="10.5" width="1" height="1" fill="#b9b9b9"/><rect x="0" y="14" width="1" height="1" fill="#b9b9b9"/><rect x="4" y="0" width="1" height="1" fill="#b9b9b9"/><rect x="4" y="3.5" width="1" height="1" fill="#b9b9b9"/><rect x="4" y="7" width="1" height="1" fill="#b9b9b9"/><rect x="4" y="10.5" width="1" height="1" fill="#b9b9b9"/><rect x="4" y="14" width="1" height="1" fill="#b9b9b9"/></svg>
<svg style="left:937px;top:168px" width="6" height="16" viewBox="0 0 6 16"><rect x="0" y="0" width="1" height="1" fill="#b9b9b9"/><rect x="0" y="3.5" width="1" height="1" fill="#b9b9b9"/><rect x="0" y="7" width="1" height="1" fill="#b9b9b9"/><rect x="0" y="10.5" width="1" height="1" fill="#b9b9b9"/><rect x="0" y="14" width="1" height="1" fill="#b9b9b9"/><rect x="4" y="0" width="1" height="1" fill="#b9b9b9"/><rect x="4" y="3.5" width="1" height="1" fill="#b9b9b9"/><rect x="4" y="7" width="1" height="1" fill="#b9b9b9"/><rect x="4" y="10.5" width="1" height="1" fill="#b9b9b9"/><rect x="4" y="14" width="1" height="1" fill="#b9b9b9"/></svg>
<svg style="left:1020px;top:168px" width="6" height="16" viewBox="0 0 6 16"><rect x="0" y="0" width="1" height="1" fill="#b9b9b9"/><rect x="0" y="3.5" width="1" height="1" fill="#b9b9b9"/><rect x="0" y="7" width="1" height="1" fill="#b9b9b9"/><rect x="0" y="10.5" width="1" height="1" fill="#b9b9b9"/><rect x="0" y="14" width="1" height="1" fill="#b9b9b9"/><rect x="4" y="0" width="1" height="1" fill="#b9b9b9"/><rect x="4" y="3.5" width="1" height="1" fill="#b9b9b9"/><rect x="4" y="7" width="1" height="1" fill="#b9b9b9"/><rect x="4" y="10.5" width="1" height="1" fill="#b9b9b9"/><rect x="4" y="14" width="1" height="1" fill="#b9b9b9"/></svg>
<svg style="left:1200px;top:168px" width="6" height="16" viewBox="0 0 6 16"><rect x="0" y="0" width="1" height="1" fill="#b9b9b9"/><rect x="0" y="3.5" width="1" height="1" fill="#b9b9b9"/><rect x="0" y="7" width="1" height="1" fill="#b9b9b9"/><rect x="0" y="10.5" width="1" height="1" fill="#b9b9b9"/><rect x="0" y="14" width="1" height="1" fill="#b9b9b9"/><rect x="4" y="0" width="1" height="1" fill="#b9b9b9"/><rect x="4" y="3.5" width="1" height="1" fill="#b9b9b9"/><rect x="4" y="7" width="1" height="1" fill="#b9b9b9"/><rect x="4" y="10.5" width="1" height="1" fill="#b9b9b9"/><rect x="4" y="14" width="1" height="1" fill="#b9b9b9"/></svg>
<svg style="left:31.0px;top:163.0px" width="24" height="24" viewBox="0 0 24 24"><path d="M5 3L12 10L19 3L22 6L15 12L22 18L19 21L12 14L5 21L2 18L9 12L2 6Z" fill="#f2f2f2" stroke="#d0d0d0" stroke-width="1.1"/></svg>
<div style="position:absolute;left:64px;top:160px;width:173px;height:31px;background:#f2f2f2;border:1px solid #cfcfcf;border-radius:2px"></div>
<div class="t" style="left:69.0px;top:169.46px;font-size:16px;letter-spacing:0.491px;font-weight:400;color:#b4b4b4;font-family:'Liberation Sans',sans-serif;">No filter geometry set</div>
<div style="position:absolute;left:242px;top:160px;width:32px;height:31px;background:#dcdcdc;border:1px solid #cdcdcd;border-radius:3px"></div>
<svg style="left:246.7px;top:164.0px" width="22" height="22" viewBox="0 0 24 24"><path d="M2 12C6 6 18 6 22 12C18 18 6 18 2 12Z" fill="#e8e8e8" stroke="#b8b8b8"/><circle cx="12" cy="12" r="3.5" fill="#c4c4c4"/><circle cx="12" cy="11" r="1.2" fill="#9a9a9a"/></svg>
<svg style="left:282.0px;top:163.0px" width="24" height="24" viewBox="0 0 24 24"><rect x="1.5" y="1.5" width="8" height="9" fill="none" stroke="#cdcdcd" stroke-dasharray="1.5 1.5"/><circle cx="14" cy="10" r="7" fill="#f4f4f4" stroke="#d0d0d0" stroke-width="1.4"/><path d="M3 22L8.5 16" stroke="#d0d0d0" stroke-width="3"/></svg>
<div style="position:absolute;left:323px;top:168px;width:24px;height:16px;background:#0000f0;border:1px solid #222"></div>
<svg style="left:354.5px;top:172px" width="10" height="6" viewBox="0 0 10 6"><path d="M1 1H9L5 5Z" fill="#444"/></svg>
<div style="position:absolute;left:374px;top:164.0px;width:1px;height:22px;background:#d2d2d2"></div>
<div style="position:absolute;left:496.6px;top:164.0px;width:1px;height:22px;background:#d2d2d2"></div>
<div style="position:absolute;left:778.8px;top:164.0px;width:1px;height:22px;background:#d2d2d2"></div>
<svg style="left:385.5px;top:163.0px" width="24" height="24" viewBox="0 0 24 24"><rect x="3" y="3" width="15" height="15" fill="#cfe3f6" stroke="#7f9fc3" stroke-width="0.9"/><rect x="13.5" y="13.5" width="9.5" height="9.5" rx="1.5" fill="#4f9a4f" stroke="#3c7a3c" stroke-width="0.6"/><path d="M18.25 15.5V21.0M15.5 18.25H21.0" stroke="#fff" stroke-width="1.8"/></svg>
<svg style="left:423.5px;top:163.0px" width="24" height="24" viewBox="0 0 24 24"><circle cx="9" cy="8" r="6.5" fill="#5d8cc6" stroke="#3e6aa3" stroke-width="0.7"/><circle cx="7" cy="19" r="3.8" fill="#2c4c78"/><circle cx="17" cy="16" r="3.5" fill="#2c4c78"/><circle cx="18.5" cy="4.5" r="1.8" fill="#fff" stroke="#555" stroke-width="0.7"/><rect x="14" y="14" width="9.5" height="9.5" rx="1.5" fill="#4f9a4f" stroke="#3c7a3c" stroke-width="0.6"/><path d="M18.75 16V21.5M16 18.75H21.5" stroke="#fff" stroke-width="1.8"/></svg>
<svg style="left:459.8px;top:163.0px" width="24" height="24" viewBox="0 0 24 24"><path d="M3 4L16 3L9 20L4 16Z" fill="none" stroke="#222" stroke-width="1.1"/><circle cx="3" cy="4" r="2.2" fill="#3a7be0"/><circle cx="16" cy="3" r="2.2" fill="#3a7be0"/><circle cx="9" cy="20" r="2.2" fill="#3a7be0"/><circle cx="4" cy="16" r="2.2" fill="#3a7be0"/><rect x="14" y="14" width="9.5" height="9.5" rx="1.5" fill="#4f9a4f" stroke="#3c7a3c" stroke-width="0.6"/><path d="M18.75 16V21.5M16 18.75H21.5" stroke="#fff" stroke-width="1.8"/></svg>
<svg style="left:516.0px;top:163.0px" width="24" height="24" viewBox="0 0 24 24"><path d="M6 4A5 5 0 0 0 4 11L17 22L21 18L10 7A5 5 0 0 0 6 4ZM6 4L9 7L7 9L4 6" fill="#e0e0e0" stroke="#cdcdcd" stroke-width="0.9"/></svg>
<svg style="left:560.7px;top:163.0px" width="24" height="24" viewBox="0 0 24 24"><rect x="2" y="3" width="5" height="5" fill="none" stroke="#cdcdcd" stroke-width="1.2"/><rect x="2" y="10" width="5" height="5" fill="none" stroke="#cdcdcd" stroke-width="1.2"/><rect x="2" y="17" width="5" height="5" fill="none" stroke="#cdcdcd" stroke-width="1.2"/><path d="M9 5H17M9 12H21M9 19H15" stroke="#dadada" stroke-width="2"/></svg>
<svg style="left:597.0px;top:163.0px" width="24" height="24" viewBox="0 0 24 24"><rect x="2" y="2" width="20" height="20" fill="#fff" stroke="#777" stroke-width="1"/><rect x="2" y="2" width="20" height="3" fill="#dedede"/><rect x="8" y="9" width="4" height="3.5" fill="#4d7fc0"/><rect x="8" y="15" width="4" height="3.5" fill="#4d7fc0"/><path d="M14 10H19M14 12H18M14 16H19M5 8V17H8" stroke="#777" stroke-width="0.9" fill="none"/></svg>
<svg style="left:646.2px;top:163.0px" width="24" height="24" viewBox="0 0 24 24"><path d="M2 5H22M20 5C17 13 11 18 4 21" fill="none" stroke="#333" stroke-width="1.2"/></svg>
<svg style="left:679.2px;top:163.0px" width="24" height="24" viewBox="0 0 24 24"><path d="M3 5H21" stroke="#c75" stroke-width="1.5"/><path d="M3 5H12" stroke="#7a5fb8" stroke-width="1.5"/><path d="M3 12H21" stroke="#3bb05a" stroke-width="1.5"/><path d="M12 12H21" stroke="#d64fb7" stroke-width="1.5"/><path d="M3 19H12" stroke="#b58fd0" stroke-width="1.5"/><path d="M12 19H21" stroke="#e8b87a" stroke-width="1.5"/></svg>
<svg style="left:712.3px;top:163.0px" width="24" height="24" viewBox="0 0 24 24"><path d="M2 5H22" stroke="#333" stroke-width="1.2"/><path d="M18 5L5 21" stroke="#d42" stroke-width="1.3"/><circle cx="15" cy="8.5" r="1.5" fill="#d42"/><circle cx="11" cy="13.5" r="1.5" fill="#d42"/><circle cx="6" cy="20" r="1.5" fill="#d42"/></svg>
<svg style="left:745.4px;top:163.0px" width="24" height="24" viewBox="0 0 24 24"><path d="M3 5H22M9 5L4 21M15 5L10 21M21 5L16 21" stroke="#222" stroke-width="1.4"/></svg>
<svg style="left:786.0px;top:163.0px" width="24" height="24" viewBox="0 0 24 24"><path d="M3 11C3 6 6 5 11 5H15V1L22 7L15 13V9H10C7 9 5 9 3 11Z" fill="#f1992a" stroke="#c56b0f" stroke-width="0.7"/><path d="M21 13C21 18 18 19 13 19H9V23L2 17L9 11V15H14C17 15 19 15 21 13Z" fill="#3aa13a" stroke="#227a22" stroke-width="0.7"/></svg>
<svg style="left:819.7px;top:163.0px" width="24" height="24" viewBox="0 0 24 24"><rect x="2" y="2" width="8" height="20" fill="#fff" stroke="#333" stroke-width="0.8"/><g fill="#111"><rect x="10" y="2" width="4" height="4"/><rect x="18" y="2" width="4" height="4"/><rect x="14" y="6" width="4" height="4"/><rect x="10" y="10" width="4" height="4"/><rect x="18" y="10" width="4" height="4"/><rect x="14" y="14" width="4" height="4"/><rect x="10" y="18" width="4" height="4"/><rect x="18" y="18" width="4" height="4"/></g><path d="M8 10L12 12L8 14" fill="none" stroke="#e22" stroke-width="1.4"/></svg>
<svg style="left:852.8px;top:163.0px" width="24" height="24" viewBox="0 0 24 24"><rect x="2" y="2" width="8" height="20" fill="#111"/><g fill="#111"><rect x="10" y="2" width="4" height="4"/><rect x="18" y="2" width="4" height="4"/><rect x="14" y="6" width="4" height="4"/><rect x="10" y="10" width="4" height="4"/><rect x="18" y="10" width="4" height="4"/><rect x="14" y="14" width="4" height="4"/><rect x="10" y="18" width="4" height="4"/><rect x="18" y="18" width="4" height="4"/></g><path d="M8 10L12 12L8 14" fill="none" stroke="#e22" stroke-width="1.4"/></svg>
<svg style="left:900.7px;top:163.0px" width="24" height="24" viewBox="0 0 24 24"><circle cx="12" cy="6" r="3.5" fill="none" stroke="#7aa63a" stroke-width="2"/><path d="M13.5 8L16 10.5" stroke="#7aa63a" stroke-width="2"/><text x="1.5" y="22" font-size="11.5" font-weight="bold" font-family="Liberation Sans" fill="#7aa63a">hub</text></svg>
<svg style="left:950.3px;top:163.0px" width="24" height="24" viewBox="0 0 24 24"><rect x="1" y="1" width="22" height="22" fill="#5fae4e"/><path d="M1 1H23L1 23Z" fill="#6fbd5c"/><circle cx="14" cy="9.5" r="6" fill="none" stroke="#fff" stroke-width="2"/><path d="M4 21L9.5 14.5" stroke="#fff" stroke-width="2.5"/></svg>
<svg style="left:981.7px;top:163.0px" width="24" height="24" viewBox="0 0 24 24"><rect x="1" y="2" width="20" height="20" fill="#f3c64a"/><path d="M1 8L10 12L6 22M12 2L14 12L21 14M1 16L8 14" stroke="#4a7ec8" stroke-width="2" fill="none"/><path d="M11 13L22 2" stroke="#6b3a1a" stroke-width="3"/></svg>
<svg style="left:1031.3px;top:163.0px" width="24" height="24" viewBox="0 0 24 24"><rect x="1" y="2" width="22" height="12" rx="3" fill="#4b84c2"/><text x="2.5" y="11.5" font-size="8" font-weight="bold" font-family="Liberation Sans" fill="#fff">KML</text><rect x="14" y="14.5" width="9.5" height="9.5" rx="1.5" fill="#4f9a4f" stroke="#3c7a3c" stroke-width="0.6"/><path d="M18.75 16.5V22.0M16 19.25H21.5" stroke="#fff" stroke-width="1.8"/></svg>
<svg style="left:1064.4px;top:163.0px" width="24" height="24" viewBox="0 0 24 24"><rect x="1" y="2" width="22" height="12" rx="3" fill="#4b84c2"/><text x="2.5" y="11.5" font-size="8" font-weight="bold" font-family="Liberation Sans" fill="#fff">KMZ</text><rect x="14" y="14" width="9.5" height="9.5" rx="1.5" fill="#4d5a66"/><path d="M16 18.5H22M19.5 16L22 18.5L19.5 21" fill="none" stroke="#fff" stroke-width="1.1"/></svg>
<svg style="left:1097.4px;top:163.0px" width="24" height="24" viewBox="0 0 24 24"><rect x="0.5" y="2" width="23" height="12" rx="3" fill="#4b84c2"/><text x="1" y="11.5" font-size="7" font-weight="bold" font-family="Liberation Sans" fill="#fff">HTML</text><rect x="14" y="14" width="10" height="10" rx="1.5" fill="#c9a51c"/><circle cx="19" cy="19" r="2.3" fill="none" stroke="#fff" stroke-width="1.3"/><path d="M19 15.2V22.8M15.2 19H22.8M16.3 16.3L21.7 21.7M21.7 16.3L16.3 21.7" stroke="#fff" stroke-width="0.9"/></svg>
<svg style="left:1130.5px;top:163.0px" width="24" height="24" viewBox="0 0 24 24"><rect x="2" y="2" width="10" height="10" fill="#4ad04a" stroke="#233" stroke-width="0.8"/><rect x="12" y="2" width="10" height="10" fill="#e0c030" stroke="#233" stroke-width="0.8"/><rect x="2" y="12" width="10" height="10" fill="#3a7ad0" stroke="#233" stroke-width="0.8"/><rect x="12" y="12" width="10" height="10" fill="#1f6a30" stroke="#233" stroke-width="0.8"/><rect x="8" y="8" width="8" height="8" fill="#b06a30" stroke="#233" stroke-width="0.8"/></svg>
<svg style="left:1163.5px;top:163.0px" width="24" height="24" viewBox="0 0 24 24"><path d="M2 4L20 2L22 20L4 22Z" fill="#bfe6c0" stroke="#1f3a2a" stroke-width="1.4"/><path d="M8 3L16 21M3 12L21 10" stroke="#fff" stroke-width="1.2"/><path d="M5 7H9M12 6H17M6 16H10M14 15H19" stroke="#4a9a6a" stroke-width="1"/></svg>
<svg style="left:541px;top:172px" width="10" height="6" viewBox="0 0 10 6"><path d="M1 1H9L5 5Z" fill="#d6d6d6"/></svg>
<svg style="left:26.0px;top:200.0px" width="16" height="6" viewBox="0 0 16 6"><rect x="1" y="1" width="1" height="1" fill="#b9b9b9"/><rect x="4.5" y="1" width="1" height="1" fill="#b9b9b9"/><rect x="8" y="1" width="1" height="1" fill="#b9b9b9"/><rect x="11.5" y="1" width="1" height="1" fill="#b9b9b9"/><rect x="15" y="1" width="1" height="1" fill="#b9b9b9"/><rect x="1" y="4" width="1" height="1" fill="#b9b9b9"/><rect x="4.5" y="4" width="1" height="1" fill="#b9b9b9"/><rect x="8" y="4" width="1" height="1" fill="#b9b9b9"/><rect x="11.5" y="4" width="1" height="1" fill="#b9b9b9"/><rect x="15" y="4" width="1" height="1" fill="#b9b9b9"/></svg>
<svg style="left:26.0px;top:440.9px" width="16" height="6" viewBox="0 0 16 6"><rect x="1" y="1" width="1" height="1" fill="#b9b9b9"/><rect x="4.5" y="1" width="1" height="1" fill="#b9b9b9"/><rect x="8" y="1" width="1" height="1" fill="#b9b9b9"/><rect x="11.5" y="1" width="1" height="1" fill="#b9b9b9"/><rect x="15" y="1" width="1" height="1" fill="#b9b9b9"/><rect x="1" y="4" width="1" height="1" fill="#b9b9b9"/><rect x="4.5" y="4" width="1" height="1" fill="#b9b9b9"/><rect x="8" y="4" width="1" height="1" fill="#b9b9b9"/><rect x="11.5" y="4" width="1" height="1" fill="#b9b9b9"/><rect x="15" y="4" width="1" height="1" fill="#b9b9b9"/></svg>
<svg style="left:22.7px;top:210.0px" width="24" height="24" viewBox="0 0 24 24"><path d="M2 9L10 6L13 18L5 21Z" fill="#e0632a"/><path d="M5 6L13 4L16 16L8 18Z" fill="#f4c23a"/><path d="M8 3L21 1L23 14L10 16Z" fill="#5b8ac4" stroke="#3a6aa8" stroke-width="0.7"/><rect x="14" y="14" width="9.5" height="9.5" rx="1.5" fill="#4f9a4f" stroke="#3c7a3c" stroke-width="0.6"/><path d="M18.75 16V21.5M16 18.75H21.5" stroke="#fff" stroke-width="1.8"/></svg>
<svg style="left:22.7px;top:243.6px" width="24" height="24" viewBox="0 0 24 24"><path d="M2 10L12 6L22 10V18L12 23L2 18Z" fill="#f4d23a" stroke="#6a5a1a" stroke-width="0.8"/><path d="M2 10L12 14L22 10M12 14V23" fill="none" stroke="#6a5a1a" stroke-width="0.8"/><circle cx="12" cy="8" r="6.5" fill="#6b96cc" stroke="#3a5f93" stroke-width="0.7"/><path d="M8 5C10 6 9 9 12 9C14 9 15 6 16 8" fill="none" stroke="#2e4f80" stroke-width="1.4"/><rect x="13" y="13" width="10" height="10" rx="1.5" fill="#c9a51c"/><circle cx="18" cy="18" r="2.3" fill="none" stroke="#fff" stroke-width="1.3"/><path d="M18 14.2V21.8M14.2 18H21.8M15.3 15.3L20.7 20.7M20.7 15.3L15.3 20.7" stroke="#fff" stroke-width="0.9"/></svg>
<svg style="left:22.7px;top:274.7px" width="24" height="24" viewBox="0 0 24 24"><path d="M3 3L9 20L15 4L21 4" fill="none" stroke="#222" stroke-width="1.3"/><circle cx="3" cy="3" r="2" fill="#fff" stroke="#333"/><circle cx="15" cy="4" r="2" fill="#fff" stroke="#333"/><circle cx="21" cy="4" r="2" fill="#fff" stroke="#333"/><circle cx="9" cy="20" r="2" fill="#fff" stroke="#333"/><rect x="13" y="13" width="10" height="10" rx="1.5" fill="#c9a51c"/><circle cx="18" cy="18" r="2.3" fill="none" stroke="#fff" stroke-width="1.3"/><path d="M18 14.2V21.8M14.2 18H21.8M15.3 15.3L20.7 20.7M20.7 15.3L15.3 20.7" stroke="#fff" stroke-width="0.9"/></svg>
<svg style="left:22.7px;top:308.0px" width="24" height="24" viewBox="0 0 24 24"><path d="M2 23C5 14 11 5 22 2C20 9 15 16 6 19Z" fill="#7fa2d0" stroke="#3a5f93" stroke-width="0.8"/><path d="M2 23L18 6" stroke="#2e4f80" stroke-width="0.8"/><rect x="13" y="13" width="10" height="10" rx="1.5" fill="#c9a51c"/><circle cx="18" cy="18" r="2.3" fill="none" stroke="#fff" stroke-width="1.3"/><path d="M18 14.2V21.8M14.2 18H21.8M15.3 15.3L20.7 20.7M20.7 15.3L15.3 20.7" stroke="#fff" stroke-width="0.9"/></svg>
<svg style="left:22.7px;top:339.4px" width="24" height="24" viewBox="0 0 24 24"><rect x="3" y="7" width="17" height="11" rx="1.5" fill="#5d8cc6" stroke="#335f97" stroke-width="0.8"/><path d="M6 4V7M9 4V7M12 4V7M15 4V7M18 4V7M6 18V21M9 18V21M12 18V21" stroke="#333" stroke-width="1"/><rect x="13" y="13" width="10" height="10" rx="1.5" fill="#c9a51c"/><circle cx="18" cy="18" r="2.3" fill="none" stroke="#fff" stroke-width="1.3"/><path d="M18 14.2V21.8M14.2 18H21.8M15.3 15.3L20.7 20.7M20.7 15.3L15.3 20.7" stroke="#fff" stroke-width="0.9"/></svg>
<svg style="left:22.7px;top:370.5px" width="24" height="24" viewBox="0 0 24 24"><rect x="2" y="2" width="20" height="20" fill="#6d97cc" stroke="#2e4f80" stroke-width="1"/><path d="M2 12H22M12 2V22M2 2L12 12M12 2L2 12" stroke="#2e4f80" stroke-width="1"/><rect x="3" y="13" width="8" height="8" fill="#8fb0da"/><rect x="13" y="13" width="10" height="10" rx="1.5" fill="#c9a51c"/><circle cx="18" cy="18" r="2.3" fill="none" stroke="#fff" stroke-width="1.3"/><path d="M18 14.2V21.8M14.2 18H21.8M15.3 15.3L20.7 20.7M20.7 15.3L15.3 20.7" stroke="#fff" stroke-width="0.9"/></svg>
<svg style="left:22.7px;top:403.0px" width="24" height="24" viewBox="0 0 24 24"><rect x="2" y="2" width="20" height="20" rx="2" fill="#b3cbe6" stroke="#5c7fa8" stroke-width="0.8"/><path d="M4 4L10 18L18 4" fill="none" stroke="#222" stroke-width="1.2"/><circle cx="4" cy="4" r="1.6" fill="#fff" stroke="#333" stroke-width="0.8"/><circle cx="18" cy="4" r="1.6" fill="#fff" stroke="#333" stroke-width="0.8"/><circle cx="10" cy="18" r="1.6" fill="#fff" stroke="#333" stroke-width="0.8"/><rect x="13" y="13" width="10" height="10" rx="1.5" fill="#c9a51c"/><circle cx="18" cy="18" r="2.3" fill="none" stroke="#fff" stroke-width="1.3"/><path d="M18 14.2V21.8M14.2 18H21.8M15.3 15.3L20.7 20.7M20.7 15.3L15.3 20.7" stroke="#fff" stroke-width="0.9"/></svg>
<svg style="left:22.7px;top:453.4px" width="24" height="24" viewBox="0 0 24 24"><rect x="3" y="2" width="18" height="20" fill="#5d8cc6" stroke="#2e4f80" stroke-width="0.8"/><rect x="3" y="2" width="5" height="20" fill="#2c3f5a"/><text x="10.5" y="17" font-size="13" font-family="Liberation Sans" fill="#fff">?</text></svg>
<div style="position:absolute;left:58px;top:226px;width:24px;height:22px;background:#dcdcdc;border:1px solid #c2c2c2;border-radius:3px"></div>
<svg style="left:60.0px;top:226.6px" width="20" height="20" viewBox="0 0 24 24"><path d="M1 14L9 10L15 17L8 22Z" fill="#e0452a"/><path d="M3 11L10 7L15 13L9 17Z" fill="#5b8ac4"/><path d="M5 8L11 5L15 11L10 14Z" fill="#f4d23a"/><path d="M9 13L13 17L21 3L19 2Z" fill="#d4a256" stroke="#9a6a2a" stroke-width="0.6"/><path d="M7 16L13 10L17 15L12 21Z" fill="#e8c08a"/></svg>
<svg style="left:85.2px;top:226.6px" width="20" height="20" viewBox="0 0 24 24"><path d="M6 6H16V18H6Z" fill="#fff" stroke="#555" stroke-width="1"/><path d="M3 9V21H13" fill="none" stroke="#555" stroke-width="1"/><path d="M9 3V12M12 2V12M9 3H12" stroke="#555" stroke-width="1" fill="none"/><circle cx="18" cy="18" r="4" fill="#7fc27f" stroke="#3c7a3c" stroke-width="0.7"/></svg>
<svg style="left:110.7px;top:226.6px" width="20" height="20" viewBox="0 0 24 24"><path d="M1 11C5 4 17 4 21 11C17 17 5 17 1 11Z" fill="#d9e4f1" stroke="#7b99c0" stroke-width="1"/><circle cx="11" cy="10.5" r="4" fill="#5b84c0"/><circle cx="11" cy="10" r="1.5" fill="#1a2a4a"/></svg>
<svg style="left:135.4px;top:226.6px" width="20" height="20" viewBox="0 0 24 24"><path d="M2 2H22V5L15 12V21L10 23V12L2 5Z" fill="#5b8ac4" stroke="#3a6aa8" stroke-width="0.6"/><rect x="2" y="2" width="20" height="3" fill="#c8d86a"/></svg>
<svg style="left:160.9px;top:226.6px" width="20" height="20" viewBox="0 0 24 24"><text x="1" y="15" font-size="16" font-family="Liberation Serif" fill="#c8c8c8">ε</text><path d="M10 22V14C10 12 16 12 16 14V22" fill="none" stroke="#c8c8c8" stroke-width="2"/></svg>
<svg style="left:197.4px;top:226.6px" width="20" height="20" viewBox="0 0 24 24"><rect x="2" y="3" width="4" height="18" fill="none" stroke="#999" stroke-width="0.8"/><rect x="3" y="7" width="3" height="3" fill="#f4a82a"/><rect x="3" y="14" width="3" height="3" fill="#f4a82a"/><path d="M14 2V15H10L16 22L22 15H18V2Z" fill="#5b8ac4" stroke="#3a6aa8" stroke-width="0.6"/></svg>
<svg style="left:222.2px;top:226.6px" width="20" height="20" viewBox="0 0 24 24"><rect x="2" y="3" width="4" height="18" fill="none" stroke="#999" stroke-width="0.8"/><rect x="3" y="7" width="3" height="3" fill="#f4a82a"/><rect x="3" y="14" width="3" height="3" fill="#f4a82a"/><path d="M14 22V9H10L16 2L22 9H18V22Z" fill="#5b8ac4" stroke="#3a6aa8" stroke-width="0.6"/></svg>
<svg style="left:247.0px;top:226.6px" width="20" height="20" viewBox="0 0 24 24"><rect x="3" y="3" width="15" height="15" fill="#fff" stroke="#666" stroke-width="1"/><rect x="13" y="15" width="9" height="6" rx="2" fill="#e03030"/><path d="M15 18H20" stroke="#fff" stroke-width="1.5"/></svg>
<svg style="left:121.9px;top:239.5px" width="10" height="6" viewBox="0 0 10 6"><path d="M1 1H9L5 5Z" fill="#555"/></svg>
<svg style="left:147.3px;top:239.5px" width="10" height="6" viewBox="0 0 10 6"><path d="M1 1H9L5 5Z" fill="#555"/></svg>
<svg style="left:183.2px;top:233px" width="10" height="6" viewBox="0 0 10 6"><path d="M1 1H9L5 5Z" fill="#cfcfcf"/></svg>
<svg style="left:1369.0px;top:265.6px" width="22" height="22" viewBox="0 0 24 24"><path d="M1 14L9 10L15 17L8 22Z" fill="#e0452a"/><path d="M3 11L10 7L15 13L9 17Z" fill="#5b8ac4"/><path d="M5 8L11 5L15 11L10 14Z" fill="#f4d23a"/><path d="M9 13L13 17L22 3L20 2Z" fill="#d4a256" stroke="#9a6a2a" stroke-width="0.6"/><path d="M7 16L13 10L17 15L12 21Z" fill="#e8c08a"/></svg>
<svg style="left:1368.5px;top:299.8px" width="20" height="20" viewBox="0 0 24 24"><path d="M6 6H22V17H6L1.5 11.5Z" fill="#f5e03a" stroke="#c7b01a" stroke-width="1"/><text x="6.5" y="14.8" font-size="8.5" font-weight="bold" font-family="Liberation Sans" fill="#333">abc</text></svg>
<svg style="left:1368.5px;top:330.6px" width="20" height="20" viewBox="0 0 24 24"><rect x="1" y="5" width="22" height="13" rx="6" fill="#fff"/><text x="2.5" y="15.5" font-size="10" font-weight="bold" font-family="Liberation Sans" fill="#333">abc</text></svg>
<svg style="left:1368.5px;top:361.4px" width="20" height="20" viewBox="0 0 24 24"><path d="M12 2L22 7L12 12L2 7Z" fill="#e66060" stroke="#6a4a1a" stroke-width="0.8"/><path d="M2 7L12 12V23L2 18Z" fill="#7ed03a" stroke="#6a4a1a" stroke-width="0.8"/><path d="M22 7L12 12V23L22 18Z" fill="#f2d83a" stroke="#6a4a1a" stroke-width="0.8"/></svg>
<svg style="left:1368.5px;top:394.5px" width="20" height="20" viewBox="0 0 24 24"><circle cx="9" cy="9" r="7.5" fill="#dc2c2c"/><path d="M9 9L9 1.5A7.5 7.5 0 0 1 15.8 5.8Z" fill="#f1d43a"/><path d="M9 9L9 1.5A7.5 7.5 0 0 0 1.7 11Z" fill="#3aa13a"/><rect x="7" y="16" width="4" height="7" fill="#f1d43a"/><rect x="12" y="12" width="3.5" height="11" fill="#2b9a3a"/><rect x="16" y="17" width="4" height="6" fill="#c42020"/></svg>
<svg style="left:1368.5px;top:426.5px" width="20" height="20" viewBox="0 0 24 24"><path d="M2 19L6 5L22 4L20 19Z" fill="#9a9a9a"/><path d="M6 9L20 8M4 14L20 13M11 5L9 19" stroke="#c8c8c8" stroke-width="1.4"/><path d="M3 18L8 11L12 16L17 9L20 12" fill="#b8b8b8"/></svg>
<svg style="left:1368.5px;top:457.3px" width="20" height="20" viewBox="0 0 24 24"><rect x="8" y="1" width="9" height="6" fill="#e87a7a" stroke="#8a5a2a" stroke-width="0.6"/><path d="M12 7V10M5 10H19M5 10V16M10 10V16M14 10V13M19 10V16" stroke="#e0a030" stroke-width="1.4" fill="none"/><rect x="1" y="16" width="9" height="6" fill="#f4d23a" stroke="#8a6a1a" stroke-width="0.6"/><rect x="13" y="16" width="9" height="6" fill="#8ab4e0" stroke="#4a6a9a" stroke-width="0.6"/></svg>
<svg style="left:1368.5px;top:489.3px" width="20" height="20" viewBox="0 0 24 24"><path d="M3 9C3 4 8 3 13 4L13 1L18 6L13 11V8C9 7 6 7 3 9Z" fill="#5cb85c"/><path d="M21 15C21 20 16 21 11 20L11 23L6 18L11 13V16C15 17 18 17 21 15Z" fill="#e8843a"/></svg>
<svg style="left:19px;top:1015px" width="6" height="16" viewBox="0 0 6 16"><rect x="0" y="0" width="1" height="1" fill="#b9b9b9"/><rect x="0" y="3.5" width="1" height="1" fill="#b9b9b9"/><rect x="0" y="7" width="1" height="1" fill="#b9b9b9"/><rect x="0" y="10.5" width="1" height="1" fill="#b9b9b9"/><rect x="0" y="14" width="1" height="1" fill="#b9b9b9"/><rect x="4" y="0" width="1" height="1" fill="#b9b9b9"/><rect x="4" y="3.5" width="1" height="1" fill="#b9b9b9"/><rect x="4" y="7" width="1" height="1" fill="#b9b9b9"/><rect x="4" y="10.5" width="1" height="1" fill="#b9b9b9"/><rect x="4" y="14" width="1" height="1" fill="#b9b9b9"/></svg>
<svg style="left:134px;top:1015px" width="6" height="16" viewBox="0 0 6 16"><rect x="0" y="0" width="1" height="1" fill="#b9b9b9"/><rect x="0" y="3.5" width="1" height="1" fill="#b9b9b9"/><rect x="0" y="7" width="1" height="1" fill="#b9b9b9"/><rect x="0" y="10.5" width="1" height="1" fill="#b9b9b9"/><rect x="0" y="14" width="1" height="1" fill="#b9b9b9"/><rect x="4" y="0" width="1" height="1" fill="#b9b9b9"/><rect x="4" y="3.5" width="1" height="1" fill="#b9b9b9"/><rect x="4" y="7" width="1" height="1" fill="#b9b9b9"/><rect x="4" y="10.5" width="1" height="1" fill="#b9b9b9"/><rect x="4" y="14" width="1" height="1" fill="#b9b9b9"/></svg>
<svg style="left:458px;top:1015px" width="6" height="16" viewBox="0 0 6 16"><rect x="0" y="0" width="1" height="1" fill="#b9b9b9"/><rect x="0" y="3.5" width="1" height="1" fill="#b9b9b9"/><rect x="0" y="7" width="1" height="1" fill="#b9b9b9"/><rect x="0" y="10.5" width="1" height="1" fill="#b9b9b9"/><rect x="0" y="14" width="1" height="1" fill="#b9b9b9"/><rect x="4" y="0" width="1" height="1" fill="#b9b9b9"/><rect x="4" y="3.5" width="1" height="1" fill="#b9b9b9"/><rect x="4" y="7" width="1" height="1" fill="#b9b9b9"/><rect x="4" y="10.5" width="1" height="1" fill="#b9b9b9"/><rect x="4" y="14" width="1" height="1" fill="#b9b9b9"/></svg>
<svg style="left:507px;top:1015px" width="6" height="16" viewBox="0 0 6 16"><rect x="0" y="0" width="1" height="1" fill="#b9b9b9"/><rect x="0" y="3.5" width="1" height="1" fill="#b9b9b9"/><rect x="0" y="7" width="1" height="1" fill="#b9b9b9"/><rect x="0" y="10.5" width="1" height="1" fill="#b9b9b9"/><rect x="0" y="14" width="1" height="1" fill="#b9b9b9"/><rect x="4" y="0" width="1" height="1" fill="#b9b9b9"/><rect x="4" y="3.5" width="1" height="1" fill="#b9b9b9"/><rect x="4" y="7" width="1" height="1" fill="#b9b9b9"/><rect x="4" y="10.5" width="1" height="1" fill="#b9b9b9"/><rect x="4" y="14" width="1" height="1" fill="#b9b9b9"/></svg>
<svg style="left:557px;top:1015px" width="6" height="16" viewBox="0 0 6 16"><rect x="0" y="0" width="1" height="1" fill="#b9b9b9"/><rect x="0" y="3.5" width="1" height="1" fill="#b9b9b9"/><rect x="0" y="7" width="1" height="1" fill="#b9b9b9"/><rect x="0" y="10.5" width="1" height="1" fill="#b9b9b9"/><rect x="0" y="14" width="1" height="1" fill="#b9b9b9"/><rect x="4" y="0" width="1" height="1" fill="#b9b9b9"/><rect x="4" y="3.5" width="1" height="1" fill="#b9b9b9"/><rect x="4" y="7" width="1" height="1" fill="#b9b9b9"/><rect x="4" y="10.5" width="1" height="1" fill="#b9b9b9"/><rect x="4" y="14" width="1" height="1" fill="#b9b9b9"/></svg>
<svg style="left:574px;top:1015px" width="6" height="16" viewBox="0 0 6 16"><rect x="0" y="0" width="1" height="1" fill="#b9b9b9"/><rect x="0" y="3.5" width="1" height="1" fill="#b9b9b9"/><rect x="0" y="7" width="1" height="1" fill="#b9b9b9"/><rect x="0" y="10.5" width="1" height="1" fill="#b9b9b9"/><rect x="0" y="14" width="1" height="1" fill="#b9b9b9"/><rect x="4" y="0" width="1" height="1" fill="#b9b9b9"/><rect x="4" y="3.5" width="1" height="1" fill="#b9b9b9"/><rect x="4" y="7" width="1" height="1" fill="#b9b9b9"/><rect x="4" y="10.5" width="1" height="1" fill="#b9b9b9"/><rect x="4" y="14" width="1" height="1" fill="#b9b9b9"/></svg>
<svg style="left:1631px;top:1015px" width="6" height="16" viewBox="0 0 6 16"><rect x="0" y="0" width="1" height="1" fill="#b9b9b9"/><rect x="0" y="3.5" width="1" height="1" fill="#b9b9b9"/><rect x="0" y="7" width="1" height="1" fill="#b9b9b9"/><rect x="0" y="10.5" width="1" height="1" fill="#b9b9b9"/><rect x="0" y="14" width="1" height="1" fill="#b9b9b9"/><rect x="4" y="0" width="1" height="1" fill="#b9b9b9"/><rect x="4" y="3.5" width="1" height="1" fill="#b9b9b9"/><rect x="4" y="7" width="1" height="1" fill="#b9b9b9"/><rect x="4" y="10.5" width="1" height="1" fill="#b9b9b9"/><rect x="4" y="14" width="1" height="1" fill="#b9b9b9"/></svg>
<svg style="left:1680px;top:1015px" width="6" height="16" viewBox="0 0 6 16"><rect x="0" y="0" width="1" height="1" fill="#b9b9b9"/><rect x="0" y="3.5" width="1" height="1" fill="#b9b9b9"/><rect x="0" y="7" width="1" height="1" fill="#b9b9b9"/><rect x="0" y="10.5" width="1" height="1" fill="#b9b9b9"/><rect x="0" y="14" width="1" height="1" fill="#b9b9b9"/><rect x="4" y="0" width="1" height="1" fill="#b9b9b9"/><rect x="4" y="3.5" width="1" height="1" fill="#b9b9b9"/><rect x="4" y="7" width="1" height="1" fill="#b9b9b9"/><rect x="4" y="10.5" width="1" height="1" fill="#b9b9b9"/><rect x="4" y="14" width="1" height="1" fill="#b9b9b9"/></svg>
<svg style="left:31.0px;top:1010.5px" width="24" height="24" viewBox="0 0 24 24"><path d="M12 2L22 20H2Z" fill="#8cc63a"/><path d="M12 8L17 17H7Z" fill="#efefef"/><rect x="2" y="21" width="20" height="2" fill="#f08a3a"/></svg>
<svg style="left:64.0px;top:1010.5px" width="24" height="24" viewBox="0 0 24 24"><rect x="2" y="2" width="18" height="18" rx="1" fill="#3d4a23"/><text x="4" y="17" font-size="15" font-weight="bold" font-family="Liberation Serif" fill="#fff">F</text><rect x="13" y="13" width="10" height="10" rx="1.5" fill="#4d5a66"/><path d="M15 18H21M18.5 15.5L21 18L18.5 20.5" fill="none" stroke="#fff" stroke-width="1.1"/></svg>
<svg style="left:97.0px;top:1010.5px" width="24" height="24" viewBox="0 0 24 24"><circle cx="12" cy="10" r="9.5" fill="#8aaed8" stroke="#335f97" stroke-width="1"/><path d="M3 10H21M12 1V19M5 5H19M5 15H19" stroke="#335f97" stroke-width="0.7"/><ellipse cx="12" cy="10" rx="4.5" ry="9.5" fill="none" stroke="#335f97" stroke-width="0.7"/><circle cx="7" cy="20" r="3.5" fill="#111"/><circle cx="17" cy="20" r="3.5" fill="#111"/><rect x="6" y="15" width="12" height="4" fill="#111"/></svg>
<svg style="left:145.8px;top:1010.5px" width="24" height="24" viewBox="0 0 24 24"><path d="M12 2C7 2 7 4 7 6V8H12V9H5C2 9 2 12 2 14C2 17 3 18 5 18H7V15C7 13 8 12 10 12H15C16 12 17 11 17 10V6C17 4 16 2 12 2Z" fill="#3a78b6"/><path d="M12 22C17 22 17 20 17 18V16H12V15H19C22 15 22 12 22 10C22 7 21 6 19 6H17V9C17 11 16 12 14 12H9C8 12 7 13 7 14V18C7 20 8 22 12 22Z" fill="#f4cf40"/><circle cx="9.5" cy="4.5" r="1" fill="#fff"/><path d="M17 18L21 20L17 22" fill="none" stroke="#555" stroke-width="1"/></svg>
<svg style="left:178.9px;top:1010.5px" width="24" height="24" viewBox="0 0 24 24"><g stroke="#222" stroke-width="0.6"><rect x="1" y="1" width="7.3" height="7.3" fill="#4a8898"/><rect x="8.3" y="1" width="7.3" height="7.3" fill="#5a7a88"/><rect x="15.6" y="1" width="7.3" height="7.3" fill="#4a4a4a"/><rect x="1" y="8.3" width="7.3" height="7.3" fill="#9ac4d0"/><rect x="8.3" y="8.3" width="7.3" height="7.3" fill="#a89aa0"/><rect x="15.6" y="8.3" width="7.3" height="7.3" fill="#9a5a5a"/><rect x="1" y="15.6" width="7.3" height="7.3" fill="#dadada"/><rect x="8.3" y="15.6" width="7.3" height="7.3" fill="#e0a8b0"/><rect x="15.6" y="15.6" width="7.3" height="7.3" fill="#c84848"/></g></svg>
<svg style="left:212.0px;top:1010.5px" width="24" height="24" viewBox="0 0 24 24"><path d="M2 2V22H22" fill="none" stroke="#888" stroke-width="1.2"/><path d="M4 18C8 16 10 14 12 9C14 5 17 4 20 4" fill="none" stroke="#c040b0" stroke-width="1.4"/><path d="M4 20C8 18 12 16 20 15" fill="none" stroke="#40b0c0" stroke-width="1.2"/></svg>
<svg style="left:256.5px;top:1010.5px" width="24" height="24" viewBox="0 0 24 24"><circle cx="9" cy="9" r="7.5" fill="#1f8a2a"/><text x="6.5" y="14" font-size="11" font-style="italic" font-weight="bold" font-family="Liberation Serif" fill="#fff">i</text><path d="M12 11L21 18L17 18.5L19.5 22.5L17.5 23.5L15 19.5L12 22Z" fill="#fff" stroke="#444" stroke-width="0.9"/></svg>
<svg style="left:289.0px;top:1010.5px" width="24" height="24" viewBox="0 0 24 24"><path d="M2 22H22M3 2V22" stroke="#111" stroke-width="1.5"/><path d="M3 2H21V20" fill="none" stroke="#111" stroke-dasharray="1 2"/><path d="M3 21L21 3" stroke="#2a40d0" stroke-width="2"/><path d="M3 11L11 11L3 19Z" fill="#f4f09a"/></svg>
<svg style="left:322.7px;top:1010.5px" width="24" height="24" viewBox="0 0 24 24"><path d="M2 22V13L7 9L19 17L22 20V22Z" fill="#2ad02a" stroke="#111" stroke-width="1.3"/><circle cx="18" cy="5" r="3.5" fill="#f4f04a"/></svg>
<svg style="left:355.7px;top:1010.5px" width="24" height="24" viewBox="0 0 24 24"><circle cx="12" cy="12" r="11" fill="#1a2250"/><circle cx="12" cy="12" r="10" fill="none" stroke="#3a4a9a" stroke-width="1.2"/><path d="M5 9C8 8 10 11 12 13C13 16 11 19 9 19C6 17 4 13 5 9Z" fill="#3a8aa0"/><circle cx="16" cy="7" r="1.2" fill="#ddd"/></svg>
<svg style="left:388.8px;top:1010.5px" width="24" height="24" viewBox="0 0 24 24"><rect x="1" y="1" width="22" height="22" fill="#858585"/><path d="M3 16L11 13L16 4L20 17L13 15L10 19Z" fill="#e0b020"/><path d="M3 16L10 14L13 18L8 20Z" fill="#3a6a2a"/></svg>
<svg style="left:421.8px;top:1010.5px" width="24" height="24" viewBox="0 0 24 24"><path d="M2 15L12 21L22 15L12 10Z" fill="#3a5a6a"/><path d="M2 12L12 18L22 12L12 6Z" fill="#8ab8c8"/><path d="M7 13C7 7 12 4 16 5C16 10 13 14 7 13Z" fill="#6aae3a"/><path d="M12 13C12 7 17 3 21 2C21 8 18 13 12 13Z" fill="#a8d05a"/></svg>
<svg style="left:471.4px;top:1010.5px" width="24" height="24" viewBox="0 0 24 24"><path d="M2 16V2H14" fill="none" stroke="#aee" stroke-width="1"/><path d="M5 19V5H17" fill="none" stroke="#3ab0c0" stroke-width="1.2"/><rect x="8" y="8" width="14" height="14" fill="#fff" stroke="#2a4050" stroke-width="1.2"/><circle cx="15" cy="15" r="4.5" fill="none" stroke="#3ab0c0" stroke-width="1.5"/></svg>
<svg style="left:519.4px;top:1010.5px" width="24" height="24" viewBox="0 0 24 24"><rect x="1" y="3" width="19" height="15" fill="#fafffa" stroke="#555" stroke-width="1"/><path d="M1 7H20M1 11H20M1 15H20M5 3V18M9 3V18M13 3V18M17 3V18" stroke="#9cd09c" stroke-width="0.6"/><rect x="12" y="12" width="11" height="11" rx="1.5" fill="#2a9a3a"/><path d="M17.5 14V21M14 17.5H21" stroke="#fff" stroke-width="2"/></svg>
<svg style="left:585.5px;top:1010.5px" width="24" height="24" viewBox="0 0 24 24"><circle cx="12" cy="12" r="11" fill="#4cb54c"/><circle cx="7" cy="12" r="2.3" fill="#fff"/><circle cx="16.5" cy="7" r="2.3" fill="#fff"/><circle cx="16.5" cy="17" r="2.3" fill="#fff"/><path d="M7 12L16.5 7M7 12L16.5 17" stroke="#fff" stroke-width="1.5"/></svg>
<svg style="left:241px;top:1019.5px" width="10" height="6" viewBox="0 0 10 6"><path d="M1 1H9L5 5Z" fill="#555"/></svg>
<svg style="left:1643.6px;top:1011.8px" width="22" height="22" viewBox="0 0 24 24"><circle cx="12" cy="12" r="10.5" fill="#d8142a" stroke="#111" stroke-width="0.8"/><path d="M1.5 11A10.5 10.5 0 0 1 22.5 11Z" fill="#0838a0"/><path d="M9 3L16 12L8 21A10.5 10.5 0 0 1 9 3Z" fill="#fff"/><path d="M8 5C5 8 5 15 8 19M10 7C8 9 8 14 10 16" fill="none" stroke="#111" stroke-width="0.9"/></svg>
<svg style="left:1692.7px;top:1013.0px" width="22" height="22" viewBox="0 0 24 24"><circle cx="11" cy="13" r="10" fill="#3d67b8"/><path d="M5 9C8 10 9 12 12 11M6 16C9 15 11 17 14 15" stroke="#a8c0f0" stroke-width="1.2" fill="none"/><circle cx="18.5" cy="10" r="5" fill="#d8ecf8"/><path d="M18 2L21 7H16Z" fill="#7ab8d8"/></svg>
<svg style="position:absolute;left:1110px;top:1050px" width="18" height="20" viewBox="0 0 18 20"><path d="M4 4C4 1 10 1 11 4L13 12C13 16 7 18 5 15Z" fill="#777" stroke="#333" stroke-width="0.8"/><path d="M9 9L16 16M16 9L9 16" stroke="#333" stroke-width="1.4"/></svg>
</body></html>
